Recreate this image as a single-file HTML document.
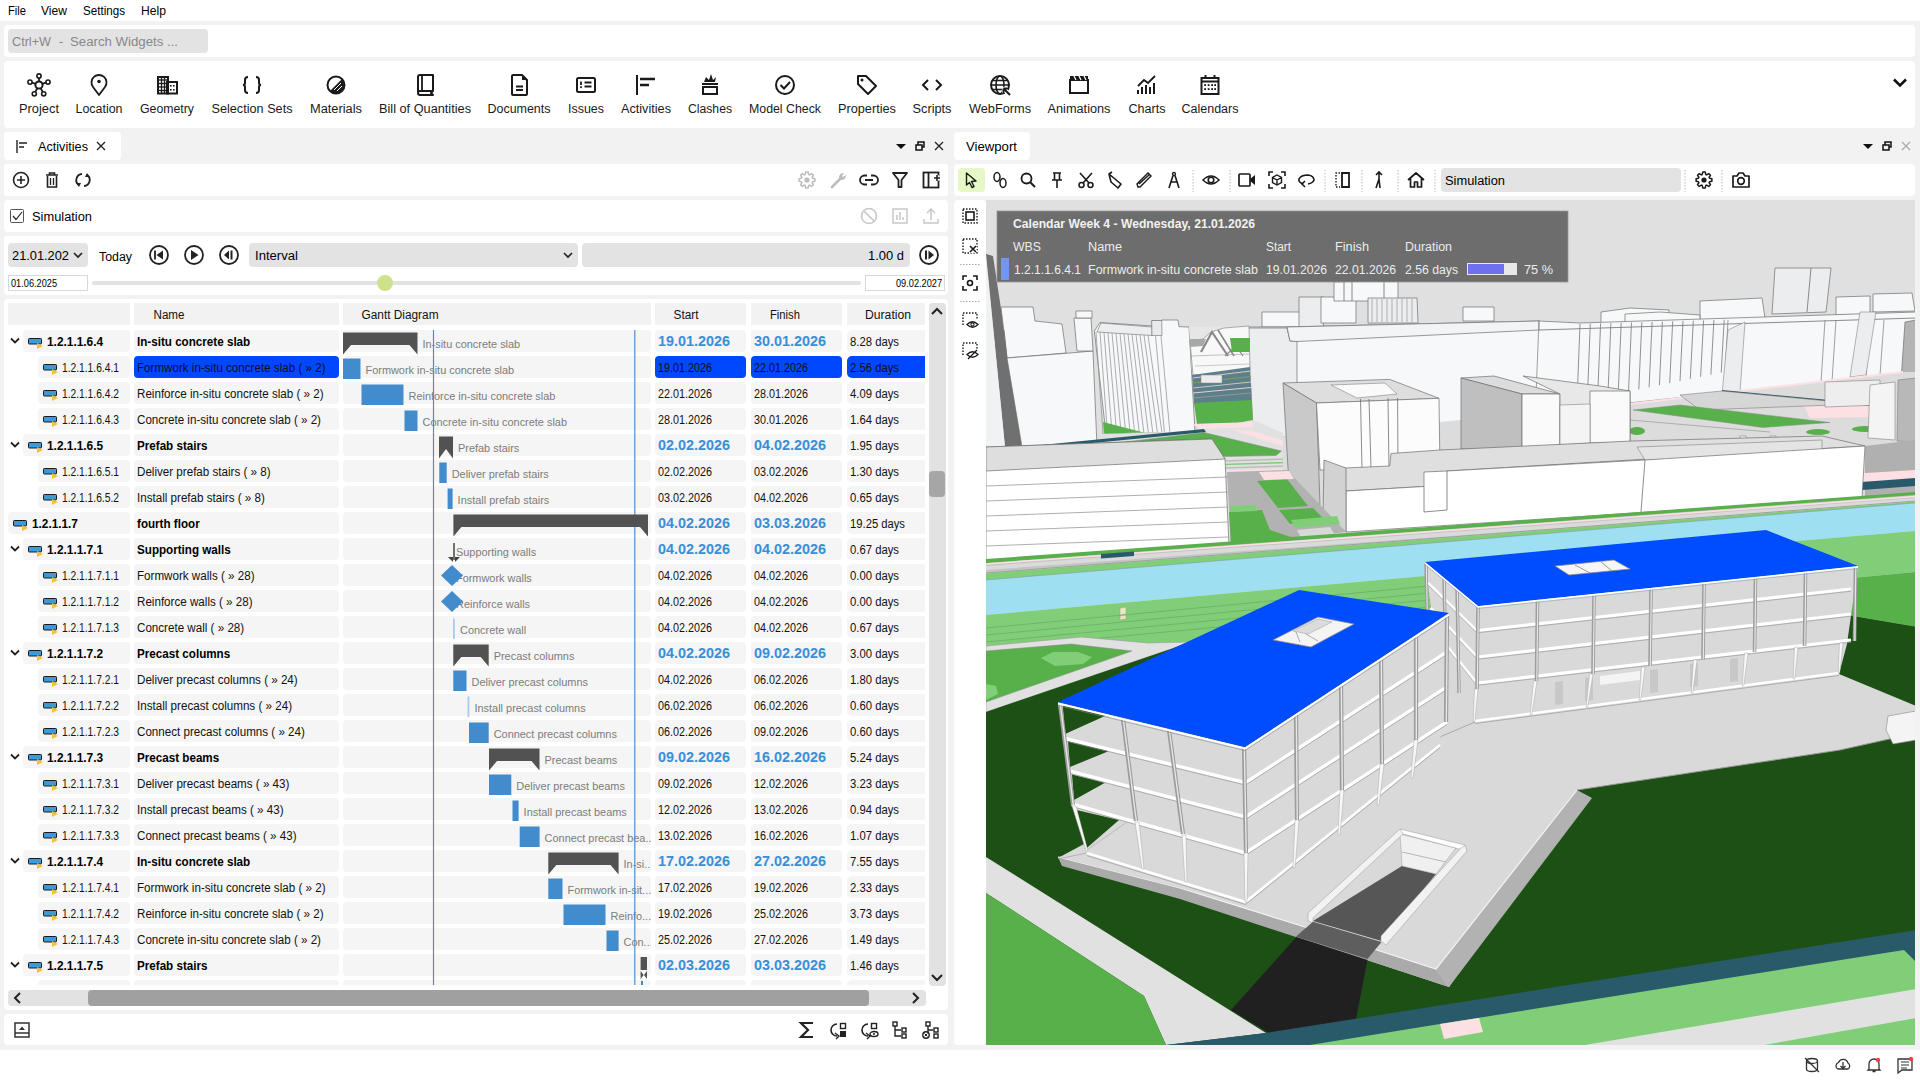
<!DOCTYPE html>
<html><head><meta charset="utf-8"><title>Activities</title>
<style>html,body{margin:0;padding:0;background:#f2f2f2;overflow:hidden}svg{display:block;font-family:"Liberation Sans",sans-serif}</style>
</head><body>
<svg width="1920" height="1080" viewBox="0 0 1920 1080">
<rect width="1920" height="1080" fill="#f2f2f2"/>
<rect x="0" y="0" width="1920" height="21" rx="0" fill="#ffffff" />
<text x="8" y="15" font-size="12.5" fill="#000" font-weight="normal" text-anchor="start" textLength="18" lengthAdjust="spacingAndGlyphs" >File</text>
<text x="41" y="15" font-size="12.5" fill="#000" font-weight="normal" text-anchor="start" textLength="26" lengthAdjust="spacingAndGlyphs" >View</text>
<text x="83" y="15" font-size="12.5" fill="#000" font-weight="normal" text-anchor="start" textLength="42" lengthAdjust="spacingAndGlyphs" >Settings</text>
<text x="141" y="15" font-size="12.5" fill="#000" font-weight="normal" text-anchor="start" textLength="25" lengthAdjust="spacingAndGlyphs" >Help</text>
<rect x="4" y="25" width="1911" height="32" rx="4" fill="#ffffff" />
<rect x="8" y="29" width="200" height="24" rx="4" fill="#e3e3e3" />
<text x="12" y="45.5" font-size="12.5" fill="#888888" font-weight="normal" text-anchor="start" textLength="39" lengthAdjust="spacingAndGlyphs" >Ctrl+W</text>
<text x="59" y="45.5" font-size="12.5" fill="#888888" font-weight="normal" text-anchor="start" >-</text>
<text x="70" y="45.5" font-size="12.5" fill="#888888" font-weight="normal" text-anchor="start" textLength="108" lengthAdjust="spacingAndGlyphs" >Search Widgets ...</text>
<rect x="4" y="61" width="1911" height="67" rx="4" fill="#ffffff" />
<text x="39" y="113" font-size="12.5" fill="#1a1a1a" font-weight="normal" text-anchor="middle" textLength="40" lengthAdjust="spacingAndGlyphs" >Project</text>
<g transform="translate(39,85)"><circle r="3.6" fill="none" stroke="#1a1a1a" stroke-width="2"/><line x1="0.0" y1="-3.6" x2="0.0" y2="-6.8" stroke="#1a1a1a" stroke-width="1.8"/><circle cx="0.0" cy="-9.0" r="2.1" fill="none" stroke="#1a1a1a" stroke-width="1.6"/><line x1="3.4" y1="-1.1" x2="6.9" y2="-2.3" stroke="#1a1a1a" stroke-width="1.8"/><circle cx="9.0" cy="-2.9" r="2.1" fill="none" stroke="#1a1a1a" stroke-width="1.6"/><line x1="-3.4" y1="-1.1" x2="-6.9" y2="-2.3" stroke="#1a1a1a" stroke-width="1.8"/><circle cx="-9.0" cy="-2.9" r="2.1" fill="none" stroke="#1a1a1a" stroke-width="1.6"/><line x1="1.7" y1="3.2" x2="3.7" y2="6.9" stroke="#1a1a1a" stroke-width="1.8"/><circle cx="4.7" cy="8.8" r="2.1" fill="none" stroke="#1a1a1a" stroke-width="1.6"/><line x1="-1.7" y1="3.2" x2="-3.7" y2="6.9" stroke="#1a1a1a" stroke-width="1.8"/><circle cx="-4.7" cy="8.8" r="2.1" fill="none" stroke="#1a1a1a" stroke-width="1.6"/></g>
<text x="99" y="113" font-size="12.5" fill="#1a1a1a" font-weight="normal" text-anchor="middle" textLength="47" lengthAdjust="spacingAndGlyphs" >Location</text>
<g transform="translate(99,85)"><path d="M0 10 L-6 2 A7.5 7.5 0 1 1 6 2 Z" fill="none" stroke="#1a1a1a" stroke-width="1.8" stroke-linejoin="round"/><circle cy="-3.5" r="1.8" fill="#1a1a1a"/></g>
<text x="167" y="113" font-size="12.5" fill="#1a1a1a" font-weight="normal" text-anchor="middle" textLength="54" lengthAdjust="spacingAndGlyphs" >Geometry</text>
<g transform="translate(167,85)"><rect x="-9" y="-8" width="10" height="16.5" fill="none" stroke="#1a1a1a" stroke-width="2"/><rect x="0" y="-3" width="10" height="11.5" fill="none" stroke="#1a1a1a" stroke-width="2"/><line x1="-9" y1="-5" x2="1" y2="-5" stroke="#1a1a1a" stroke-width="1.3"/><line x1="-9" y1="-1.5" x2="1" y2="-1.5" stroke="#1a1a1a" stroke-width="1.3"/><line x1="-9" y1="2" x2="1" y2="2" stroke="#1a1a1a" stroke-width="1.3"/><line x1="-9" y1="5.5" x2="1" y2="5.5" stroke="#1a1a1a" stroke-width="1.3"/><line x1="-5.5" y1="-8" x2="-5.5" y2="8.5" stroke="#1a1a1a" stroke-width="1.3"/><line x1="-2.5" y1="-8" x2="-2.5" y2="8.5" stroke="#1a1a1a" stroke-width="1.3"/><rect x="3" y="0" width="1.6" height="1.6" fill="#1a1a1a"/><rect x="6" y="0" width="1.6" height="1.6" fill="#1a1a1a"/><rect x="3" y="4" width="1.6" height="1.6" fill="#1a1a1a"/><rect x="6" y="4" width="1.6" height="1.6" fill="#1a1a1a"/></g>
<text x="252" y="113" font-size="12.5" fill="#1a1a1a" font-weight="normal" text-anchor="middle" textLength="81" lengthAdjust="spacingAndGlyphs" >Selection Sets</text>
<g transform="translate(252,85)"><path d="M-4 -8 Q-7 -8 -7 -5 V-2 Q-7 0 -9 0 Q-7 0 -7 2 V5 Q-7 8 -4 8 M4 -8 Q7 -8 7 -5 V-2 Q7 0 9 0 Q7 0 7 2 V5 Q7 8 4 8" fill="none" stroke="#1a1a1a" stroke-width="2"/></g>
<text x="336" y="113" font-size="12.5" fill="#1a1a1a" font-weight="normal" text-anchor="middle" textLength="52" lengthAdjust="spacingAndGlyphs" >Materials</text>
<g transform="translate(336,85)"><circle r="8.5" fill="none" stroke="#1a1a1a" stroke-width="2"/><path d="M6 -6 A8.5 8.5 0 0 1 -6 6 Z" fill="#1a1a1a"/><path d="M-2 5 L5 -2 M1 6 L6 1" stroke="#fff" stroke-width="1"/></g>
<text x="425" y="113" font-size="12.5" fill="#1a1a1a" font-weight="normal" text-anchor="middle" textLength="92" lengthAdjust="spacingAndGlyphs" >Bill of Quantities</text>
<g transform="translate(425,85)"><path d="M-7 7 V-8 Q-7 -10 -5 -10 H8 V6 H-5 Q-7 6 -7 8 Q-7 10 -5 10 H8 L6 8 L8 6" fill="none" stroke="#1a1a1a" stroke-width="2" stroke-linejoin="round"/><line x1="-3" y1="-10" x2="-3" y2="6" stroke="#1a1a1a" stroke-width="1.8"/></g>
<text x="519" y="113" font-size="12.5" fill="#1a1a1a" font-weight="normal" text-anchor="middle" textLength="63" lengthAdjust="spacingAndGlyphs" >Documents</text>
<g transform="translate(519,85)"><path d="M-7 -9 Q-7 -10 -6 -10 H3 L8 -5 V9 Q8 10 7 10 H-6 Q-7 10 -7 9 Z" fill="none" stroke="#1a1a1a" stroke-width="2" stroke-linejoin="round"/><path d="M3 -10 L8 -5 H3 Z" fill="#1a1a1a"/><path d="M-3 1.5 H4 M-3 5 H4" stroke="#1a1a1a" stroke-width="1.8"/></g>
<text x="586" y="113" font-size="12.5" fill="#1a1a1a" font-weight="normal" text-anchor="middle" textLength="36" lengthAdjust="spacingAndGlyphs" >Issues</text>
<g transform="translate(586,85)"><rect x="-9" y="-7" width="18" height="14" rx="1.5" fill="none" stroke="#1a1a1a" stroke-width="2"/><path d="M-5 -3.5 V0 M-1.5 -2.5 H5.5 M-1.5 1.5 H5.5" stroke="#1a1a1a" stroke-width="1.8"/><rect x="-5.9" y="1.3" width="1.8" height="1.8" fill="#1a1a1a"/></g>
<text x="646" y="113" font-size="12.5" fill="#1a1a1a" font-weight="normal" text-anchor="middle" textLength="50" lengthAdjust="spacingAndGlyphs" >Activities</text>
<g transform="translate(646,85)"><path d="M-9 -10 V10" stroke="#1a1a1a" stroke-width="2"/><path d="M-6 -6 H9 M-6 0 H3" stroke="#1a1a1a" stroke-width="2.5"/></g>
<text x="710" y="113" font-size="12.5" fill="#1a1a1a" font-weight="normal" text-anchor="middle" textLength="44" lengthAdjust="spacingAndGlyphs" >Clashes</text>
<g transform="translate(710,85)"><rect x="-7" y="2" width="14" height="7" fill="none" stroke="#1a1a1a" stroke-width="2"/><path d="M-8 -1 H8" stroke="#1a1a1a" stroke-width="2"/><path d="M-6 -3 L-4 -8 L-1 -5 L1 -11 L3 -5 L6 -8 L5 -3 Z" fill="#1a1a1a"/></g>
<text x="785" y="113" font-size="12.5" fill="#1a1a1a" font-weight="normal" text-anchor="middle" textLength="72" lengthAdjust="spacingAndGlyphs" >Model Check</text>
<g transform="translate(785,85)"><circle r="9" fill="none" stroke="#1a1a1a" stroke-width="2"/><path d="M-4.5 0 L-1 3.5 L5 -3" fill="none" stroke="#1a1a1a" stroke-width="2"/></g>
<text x="867" y="113" font-size="12.5" fill="#1a1a1a" font-weight="normal" text-anchor="middle" textLength="58" lengthAdjust="spacingAndGlyphs" >Properties</text>
<g transform="translate(867,85)"><path d="M-9 -9 H-1 L9 1 L1 9 L-9 -1 Z" fill="none" stroke="#1a1a1a" stroke-width="2" stroke-linejoin="round"/><circle cx="-5" cy="-5" r="1.5" fill="#1a1a1a"/></g>
<text x="932" y="113" font-size="12.5" fill="#1a1a1a" font-weight="normal" text-anchor="middle" textLength="39" lengthAdjust="spacingAndGlyphs" >Scripts</text>
<g transform="translate(932,85)"><path d="M-4 -5 L-9 0 L-4 5 M4 -5 L9 0 L4 5" fill="none" stroke="#1a1a1a" stroke-width="2"/></g>
<text x="1000" y="113" font-size="12.5" fill="#1a1a1a" font-weight="normal" text-anchor="middle" textLength="62" lengthAdjust="spacingAndGlyphs" >WebForms</text>
<g transform="translate(1000,85)"><circle r="9" fill="none" stroke="#1a1a1a" stroke-width="2"/><ellipse rx="4" ry="9" fill="none" stroke="#1a1a1a" stroke-width="1.6"/><path d="M-9 0 H9 M-8 -4.5 H8 M-8 4.5 H8" stroke="#1a1a1a" stroke-width="1.4"/><path d="M3 3 L10 10 M4 8 V4 H8" stroke="#fff" stroke-width="4"/><path d="M3.5 3.5 H9 M3.5 3.5 V9 M4 4 L10 10" stroke="#1a1a1a" stroke-width="2"/></g>
<text x="1079" y="113" font-size="12.5" fill="#1a1a1a" font-weight="normal" text-anchor="middle" textLength="63" lengthAdjust="spacingAndGlyphs" >Animations</text>
<g transform="translate(1079,85)"><rect x="-9" y="-5" width="18" height="13" fill="none" stroke="#1a1a1a" stroke-width="2"/><path d="M-9 -9 H9 V-5 H-9 Z" fill="#1a1a1a"/><path d="M-5 -9 L-3 -5 M0 -9 L2 -5 M5 -9 L7 -5" stroke="#fff" stroke-width="1.2"/></g>
<text x="1147" y="113" font-size="12.5" fill="#1a1a1a" font-weight="normal" text-anchor="middle" textLength="37" lengthAdjust="spacingAndGlyphs" >Charts</text>
<g transform="translate(1147,85)"><path d="M-9 9 V5 M-5 9 V2 M-1 9 V0 M3 9 V2 M7 9 V-2" stroke="#1a1a1a" stroke-width="2"/><path d="M-9 1 L-3 -5 L1 -2 L8 -9" fill="none" stroke="#1a1a1a" stroke-width="1.8"/></g>
<text x="1210" y="113" font-size="12.5" fill="#1a1a1a" font-weight="normal" text-anchor="middle" textLength="57" lengthAdjust="spacingAndGlyphs" >Calendars</text>
<g transform="translate(1210,85)"><rect x="-8.5" y="-7" width="17" height="16" fill="none" stroke="#1a1a1a" stroke-width="2"/><path d="M-8.5 -3.5 H8.5" stroke="#1a1a1a" stroke-width="2"/><path d="M-4.5 -10 V-6 M4.5 -10 V-6" stroke="#1a1a1a" stroke-width="2"/><rect x="-5.8" y="-0.8" width="1.8" height="1.8" fill="#1a1a1a"/><rect x="-2.3" y="-0.8" width="1.8" height="1.8" fill="#1a1a1a"/><rect x="1.2" y="-0.8" width="1.8" height="1.8" fill="#1a1a1a"/><rect x="4.2" y="-0.8" width="1.8" height="1.8" fill="#1a1a1a"/><rect x="-5.8" y="3.2" width="1.8" height="1.8" fill="#1a1a1a"/><rect x="-2.3" y="3.2" width="1.8" height="1.8" fill="#1a1a1a"/><rect x="1.2" y="3.2" width="1.8" height="1.8" fill="#1a1a1a"/><rect x="4.2" y="3.2" width="1.8" height="1.8" fill="#1a1a1a"/></g>
<path d="M1894 79.5 L1900 85.5 L1906 79.5" fill="none" stroke="#111" stroke-width="2.6" />
<rect x="4" y="132" width="117" height="28" rx="4" fill="#ffffff" />
<g transform="translate(21,146)"><path d="M-4 -6 V7" stroke="#222" stroke-width="1.4"/><path d="M-2 -3 H6 M-2 1 H3" stroke="#222" stroke-width="1.6"/></g>
<text x="38" y="151" font-size="12.5" fill="#000" font-weight="normal" text-anchor="start" textLength="50" lengthAdjust="spacingAndGlyphs" >Activities</text>
<path d="M97 142 L105 150 M105 142 L97 150" fill="none" stroke="#222" stroke-width="1.3" />
<path d="M896 144 L906 144 L901 149 Z" fill="#111" stroke="none" stroke-width="1" />
<g transform="translate(920,146)"><rect x="-4" y="-1" width="6" height="5" fill="none" stroke="#111" stroke-width="1.5"/><path d="M-2 -1 V-4 H4 V1 H2" fill="none" stroke="#111" stroke-width="1.5"/></g>
<path d="M935 142 L943 150 M943 142 L935 150" fill="none" stroke="#222" stroke-width="1.3" />
<rect x="4" y="164" width="944" height="32" rx="4" fill="#ffffff" />
<g transform="translate(21,180)"><circle r="7.5" fill="none" stroke="#222" stroke-width="1.6"/><path d="M-4 0 H4 M0 -4 V4" stroke="#222" stroke-width="1.6"/></g>
<g transform="translate(52,180)"><path d="M-6 -5 H6 M-2.5 -5 V-7 H2.5 V-5" fill="none" stroke="#222" stroke-width="1.6"/><path d="M-4.5 -4 V7 H4.5 V-4" fill="none" stroke="#222" stroke-width="1.6"/><path d="M-1.5 -2 V5 M1.5 -2 V5" stroke="#222" stroke-width="1.3"/></g>
<g transform="translate(83,180)"><path d="M-1 -6 A6 6 0 0 0 -4 5 M1 6 A6 6 0 0 0 4 -5" fill="none" stroke="#222" stroke-width="1.8"/><path d="M-7 3 L-4 7 L-2 3 Z M7 -3 L4 -7 L2 -3 Z" fill="#222"/></g>
<g transform="translate(807,180)"><polygon points="5.55,-1.70 7.90,-1.25 7.90,1.25 5.55,1.70 5.12,2.72 6.47,4.70 4.70,6.47 2.72,5.12 1.70,5.55 1.25,7.90 -1.25,7.90 -1.70,5.55 -2.72,5.12 -4.70,6.47 -6.47,4.70 -5.12,2.72 -5.55,1.70 -7.90,1.25 -7.90,-1.25 -5.55,-1.70 -5.12,-2.72 -6.47,-4.70 -4.70,-6.47 -2.72,-5.12 -1.70,-5.55 -1.25,-7.90 1.25,-7.90 1.70,-5.55 2.72,-5.12 4.70,-6.47 6.47,-4.70 5.12,-2.72" fill="none" stroke="#bdbdbd" stroke-width="1.5" stroke-linejoin="round"/><circle r="2.6" fill="#bdbdbd"/></g>
<g transform="translate(838,180)"><path d="M-6 7 L2 -1" stroke="#bdbdbd" stroke-width="2.6" stroke-linecap="round"/><path d="M1 -2 A4.5 4.5 0 0 1 6 -7 L4 -4 L5 -3 L8 -5 A4.5 4.5 0 0 1 3 0 Z" fill="#bdbdbd"/></g>
<g transform="translate(869,180)"><path d="M-2 -4.5 H-4.5 A4.5 4.5 0 0 0 -4.5 4.5 H-2 M2 -4.5 H4.5 A4.5 4.5 0 0 1 4.5 4.5 H2 M-4 0 H4" fill="none" stroke="#222" stroke-width="1.8"/></g>
<g transform="translate(900,180)"><path d="M-7 -7 H7 L1.5 0 V7 H-1.5 V0 Z" fill="none" stroke="#222" stroke-width="1.8" stroke-linejoin="round"/></g>
<g transform="translate(931,180)"><rect x="-7.5" y="-7.5" width="15" height="15" fill="none" stroke="#222" stroke-width="1.8"/><path d="M-2.5 -7.5 V7.5" stroke="#222" stroke-width="1.8"/><path d="M3 -2 H9 M6 -5 V1" stroke="#fff" stroke-width="3.5"/><path d="M3 -2 H9 M6 -5 V1" stroke="#222" stroke-width="1.6"/></g>
<rect x="4" y="200" width="944" height="32" rx="4" fill="#ffffff" />
<rect x="10.5" y="209.5" width="13" height="13" rx="1" fill="#fff" stroke="#555" stroke-width="1"/>
<path d="M13 216 L16 219.5 L22 212" fill="none" stroke="#222" stroke-width="1.2" />
<text x="32" y="221" font-size="12.5" fill="#000" font-weight="normal" text-anchor="start" textLength="60" lengthAdjust="spacingAndGlyphs" >Simulation</text>
<g transform="translate(869,216)"><circle r="7.5" fill="none" stroke="#c8c8c8" stroke-width="1.6"/><path d="M-5.3 -5.3 L5.3 5.3" stroke="#c8c8c8" stroke-width="1.6"/></g>
<g transform="translate(900,216)"><rect x="-7" y="-7" width="14" height="14" fill="none" stroke="#c8c8c8" stroke-width="1.5"/><path d="M-3 4 V-1 M0 4 V-4 M3 4 V1" stroke="#c8c8c8" stroke-width="1.5"/></g>
<g transform="translate(931,216)"><path d="M-7 3 V7 H7 V3 M0 4 V-7 M-4 -3 L0 -7 L4 -3" fill="none" stroke="#c8c8c8" stroke-width="1.5"/></g>
<rect x="4" y="236" width="944" height="59" rx="4" fill="#ffffff" />
<rect x="8" y="243" width="80" height="24" rx="4" fill="#e3e3e3" />
<text x="12" y="260" font-size="12.5" fill="#000" font-weight="normal" text-anchor="start" textLength="57" lengthAdjust="spacingAndGlyphs" >21.01.202</text>
<path d="M74 253 L78 257 L82 253" fill="none" stroke="#222" stroke-width="1.6" />
<text x="99" y="261" font-size="12.5" fill="#000" font-weight="normal" text-anchor="start" textLength="33" lengthAdjust="spacingAndGlyphs" >Today</text>
<g transform="translate(159,255)"><circle r="9" fill="none" stroke="#222" stroke-width="1.8"/><path d="M-4 -4.5 V4.5" stroke="#222" stroke-width="1.8"/><path d="M4 -4.5 V4.5 L-2.5 0 Z" fill="#222"/></g>
<g transform="translate(194,255)"><circle r="9" fill="none" stroke="#222" stroke-width="1.8"/><path d="M-3 -5 V5 L4.5 0 Z" fill="#222"/></g>
<g transform="translate(229,255)"><circle r="9" fill="none" stroke="#222" stroke-width="1.8"/><path d="M2.5 -4.5 V4.5" stroke="#222" stroke-width="2"/><path d="M0 -4.5 V4.5 L-5 0 Z" fill="#222"/></g>
<rect x="249" y="243" width="329" height="24" rx="4" fill="#e3e3e3" />
<text x="255" y="260" font-size="12.5" fill="#000" font-weight="normal" text-anchor="start" textLength="43" lengthAdjust="spacingAndGlyphs" >Interval</text>
<path d="M564 253 L568 257 L572 253" fill="none" stroke="#222" stroke-width="1.6" />
<rect x="582" y="243" width="328" height="24" rx="4" fill="#e3e3e3" />
<text x="904" y="260" font-size="12.5" fill="#000" font-weight="normal" text-anchor="end" textLength="36" lengthAdjust="spacingAndGlyphs" >1.00 d</text>
<g transform="translate(929,255)"><circle r="9" fill="none" stroke="#222" stroke-width="1.8"/><path d="M-3 -4.5 V4.5" stroke="#222" stroke-width="2"/><path d="M-0.5 -4.5 V4.5 L5 0 Z" fill="#222"/></g>
<rect x="8.5" y="275.5" width="79" height="15" rx="0" fill="#fff" stroke="#d8d8d8" stroke-width="1"/>
<text x="11" y="287" font-size="10" fill="#000" font-weight="normal" text-anchor="start" textLength="46" lengthAdjust="spacingAndGlyphs" >01.06.2025</text>
<rect x="92" y="281" width="769" height="4" rx="2" fill="#e2e2e2" />
<circle cx="385" cy="283" r="8" fill="#cde28b"/>
<rect x="865.5" y="275.5" width="79" height="15" rx="0" fill="#fff" stroke="#d8d8d8" stroke-width="1"/>
<text x="942" y="287" font-size="10" fill="#000" font-weight="normal" text-anchor="end" textLength="46" lengthAdjust="spacingAndGlyphs" >09.02.2027</text>
<rect x="4" y="299" width="944" height="711" rx="4" fill="#ffffff" />
<rect x="8" y="303" width="122" height="22" rx="1" fill="#f2f2f2" />
<rect x="134" y="303" width="205" height="22" rx="1" fill="#f2f2f2" />
<text x="169" y="319" font-size="12.5" fill="#111" font-weight="normal" text-anchor="middle" textLength="31" lengthAdjust="spacingAndGlyphs" >Name</text>
<rect x="343" y="303" width="308" height="22" rx="1" fill="#f2f2f2" />
<text x="400" y="319" font-size="12.5" fill="#111" font-weight="normal" text-anchor="middle" textLength="77" lengthAdjust="spacingAndGlyphs" >Gantt Diagram</text>
<rect x="655" y="303" width="91" height="22" rx="1" fill="#f2f2f2" />
<text x="686" y="319" font-size="12.5" fill="#111" font-weight="normal" text-anchor="middle" textLength="25" lengthAdjust="spacingAndGlyphs" >Start</text>
<rect x="751" y="303" width="91" height="22" rx="1" fill="#f2f2f2" />
<text x="785" y="319" font-size="12.5" fill="#111" font-weight="normal" text-anchor="middle" textLength="30" lengthAdjust="spacingAndGlyphs" >Finish</text>
<rect x="847" y="303" width="78" height="22" rx="1" fill="#f2f2f2" />
<text x="888" y="319" font-size="12.5" fill="#111" font-weight="normal" text-anchor="middle" textLength="46" lengthAdjust="spacingAndGlyphs" >Duration</text>
<defs><clipPath id="gclip"><rect x="343" y="328" width="308" height="657"/></clipPath><clipPath id="tclip"><rect x="4" y="328" width="921" height="657"/></clipPath></defs>
<g clip-path="url(#tclip)">
<rect x="23" y="330" width="107" height="22" rx="4" fill="#f5f5f5" />
<rect x="134" y="330" width="205" height="22" rx="4" fill="#f5f5f5" />
<rect x="343" y="330" width="308" height="22" rx="4" fill="#f5f5f5" />
<rect x="655" y="330" width="91" height="22" rx="4" fill="#f5f5f5" />
<rect x="751" y="330" width="91" height="22" rx="4" fill="#f5f5f5" />
<rect x="847" y="330" width="88" height="22" rx="5" fill="#f5f5f5" />
<path d="M11 338.5 L15 342.5 L19 338.5" fill="none" stroke="#222" stroke-width="1.8" />
<rect x="28.5" y="338.5" width="13" height="5.5" rx="0.8" fill="#3d9ad6" stroke="#1a1a1a" stroke-width="1"/>
<path d="M37 343 L43 346 L37 349 Z" fill="#f5c235" stroke="none" stroke-width="1" />
<text x="47" y="345.5" font-size="12.2" fill="#000" font-weight="bold" text-anchor="start" textLength="56.099999999999994" lengthAdjust="spacingAndGlyphs" >1.2.1.1.6.4</text>
<text x="137" y="345.5" font-size="12.5" fill="#000" font-weight="bold" text-anchor="start" textLength="113.2" lengthAdjust="spacingAndGlyphs" >In-situ concrete slab</text>
<text x="658" y="346.0" font-size="14" fill="#3b8ed6" font-weight="bold" text-anchor="start" textLength="72" lengthAdjust="spacingAndGlyphs" >19.01.2026</text>
<text x="754" y="346.0" font-size="14" fill="#3b8ed6" font-weight="bold" text-anchor="start" textLength="72" lengthAdjust="spacingAndGlyphs" >30.01.2026</text>
<text x="850" y="345.5" font-size="12" fill="#111" font-weight="normal" text-anchor="start" textLength="49" lengthAdjust="spacingAndGlyphs" >8.28 days</text>
<rect x="38" y="356" width="92" height="22" rx="4" fill="#f5f5f5" />
<rect x="134" y="356" width="205" height="22" rx="4" fill="#0048ff" />
<rect x="343" y="356" width="308" height="22" rx="4" fill="#f5f5f5" />
<rect x="655" y="356" width="91" height="22" rx="4" fill="#0048ff" />
<rect x="751" y="356" width="91" height="22" rx="4" fill="#0048ff" />
<rect x="847" y="356" width="88" height="22" rx="5" fill="#0048ff" />
<rect x="43.5" y="364.5" width="13" height="5.5" rx="0.8" fill="#3d9ad6" stroke="#1a1a1a" stroke-width="1"/>
<path d="M52 369 L58 372 L52 375 Z" fill="#f5c235" stroke="none" stroke-width="1" />
<text x="62" y="371.5" font-size="12" fill="#111" font-weight="normal" text-anchor="start" textLength="56.94" lengthAdjust="spacingAndGlyphs" >1.2.1.1.6.4.1</text>
<text x="137" y="371.5" font-size="12.3" fill="#111" font-weight="normal" text-anchor="start" textLength="188.5" lengthAdjust="spacingAndGlyphs" >Formwork in-situ concrete slab ( » 2)</text>
<text x="658" y="371.5" font-size="12" fill="#111" font-weight="normal" text-anchor="start" textLength="54" lengthAdjust="spacingAndGlyphs" >19.01.2026</text>
<text x="754" y="371.5" font-size="12" fill="#111" font-weight="normal" text-anchor="start" textLength="54" lengthAdjust="spacingAndGlyphs" >22.01.2026</text>
<text x="850" y="371.5" font-size="12" fill="#111" font-weight="normal" text-anchor="start" textLength="49" lengthAdjust="spacingAndGlyphs" >2.56 days</text>
<rect x="38" y="382" width="92" height="22" rx="4" fill="#f5f5f5" />
<rect x="134" y="382" width="205" height="22" rx="4" fill="#f5f5f5" />
<rect x="343" y="382" width="308" height="22" rx="4" fill="#f5f5f5" />
<rect x="655" y="382" width="91" height="22" rx="4" fill="#f5f5f5" />
<rect x="751" y="382" width="91" height="22" rx="4" fill="#f5f5f5" />
<rect x="847" y="382" width="88" height="22" rx="5" fill="#f5f5f5" />
<rect x="43.5" y="390.5" width="13" height="5.5" rx="0.8" fill="#3d9ad6" stroke="#1a1a1a" stroke-width="1"/>
<path d="M52 395 L58 398 L52 401 Z" fill="#f5c235" stroke="none" stroke-width="1" />
<text x="62" y="397.5" font-size="12" fill="#111" font-weight="normal" text-anchor="start" textLength="56.94" lengthAdjust="spacingAndGlyphs" >1.2.1.1.6.4.2</text>
<text x="137" y="397.5" font-size="12.3" fill="#111" font-weight="normal" text-anchor="start" textLength="186.6" lengthAdjust="spacingAndGlyphs" >Reinforce in-situ concrete slab ( » 2)</text>
<text x="658" y="397.5" font-size="12" fill="#111" font-weight="normal" text-anchor="start" textLength="54" lengthAdjust="spacingAndGlyphs" >22.01.2026</text>
<text x="754" y="397.5" font-size="12" fill="#111" font-weight="normal" text-anchor="start" textLength="54" lengthAdjust="spacingAndGlyphs" >28.01.2026</text>
<text x="850" y="397.5" font-size="12" fill="#111" font-weight="normal" text-anchor="start" textLength="49" lengthAdjust="spacingAndGlyphs" >4.09 days</text>
<rect x="38" y="408" width="92" height="22" rx="4" fill="#f5f5f5" />
<rect x="134" y="408" width="205" height="22" rx="4" fill="#f5f5f5" />
<rect x="343" y="408" width="308" height="22" rx="4" fill="#f5f5f5" />
<rect x="655" y="408" width="91" height="22" rx="4" fill="#f5f5f5" />
<rect x="751" y="408" width="91" height="22" rx="4" fill="#f5f5f5" />
<rect x="847" y="408" width="88" height="22" rx="5" fill="#f5f5f5" />
<rect x="43.5" y="416.5" width="13" height="5.5" rx="0.8" fill="#3d9ad6" stroke="#1a1a1a" stroke-width="1"/>
<path d="M52 421 L58 424 L52 427 Z" fill="#f5c235" stroke="none" stroke-width="1" />
<text x="62" y="423.5" font-size="12" fill="#111" font-weight="normal" text-anchor="start" textLength="56.94" lengthAdjust="spacingAndGlyphs" >1.2.1.1.6.4.3</text>
<text x="137" y="423.5" font-size="12.3" fill="#111" font-weight="normal" text-anchor="start" textLength="184.0" lengthAdjust="spacingAndGlyphs" >Concrete in-situ concrete slab ( » 2)</text>
<text x="658" y="423.5" font-size="12" fill="#111" font-weight="normal" text-anchor="start" textLength="54" lengthAdjust="spacingAndGlyphs" >28.01.2026</text>
<text x="754" y="423.5" font-size="12" fill="#111" font-weight="normal" text-anchor="start" textLength="54" lengthAdjust="spacingAndGlyphs" >30.01.2026</text>
<text x="850" y="423.5" font-size="12" fill="#111" font-weight="normal" text-anchor="start" textLength="49" lengthAdjust="spacingAndGlyphs" >1.64 days</text>
<rect x="23" y="434" width="107" height="22" rx="4" fill="#f5f5f5" />
<rect x="134" y="434" width="205" height="22" rx="4" fill="#f5f5f5" />
<rect x="343" y="434" width="308" height="22" rx="4" fill="#f5f5f5" />
<rect x="655" y="434" width="91" height="22" rx="4" fill="#f5f5f5" />
<rect x="751" y="434" width="91" height="22" rx="4" fill="#f5f5f5" />
<rect x="847" y="434" width="88" height="22" rx="5" fill="#f5f5f5" />
<path d="M11 442.5 L15 446.5 L19 442.5" fill="none" stroke="#222" stroke-width="1.8" />
<rect x="28.5" y="442.5" width="13" height="5.5" rx="0.8" fill="#3d9ad6" stroke="#1a1a1a" stroke-width="1"/>
<path d="M37 447 L43 450 L37 453 Z" fill="#f5c235" stroke="none" stroke-width="1" />
<text x="47" y="449.5" font-size="12.2" fill="#000" font-weight="bold" text-anchor="start" textLength="56.099999999999994" lengthAdjust="spacingAndGlyphs" >1.2.1.1.6.5</text>
<text x="137" y="449.5" font-size="12.5" fill="#000" font-weight="bold" text-anchor="start" textLength="70.5" lengthAdjust="spacingAndGlyphs" >Prefab stairs</text>
<text x="658" y="450.0" font-size="14" fill="#3b8ed6" font-weight="bold" text-anchor="start" textLength="72" lengthAdjust="spacingAndGlyphs" >02.02.2026</text>
<text x="754" y="450.0" font-size="14" fill="#3b8ed6" font-weight="bold" text-anchor="start" textLength="72" lengthAdjust="spacingAndGlyphs" >04.02.2026</text>
<text x="850" y="449.5" font-size="12" fill="#111" font-weight="normal" text-anchor="start" textLength="49" lengthAdjust="spacingAndGlyphs" >1.95 days</text>
<rect x="38" y="460" width="92" height="22" rx="4" fill="#f5f5f5" />
<rect x="134" y="460" width="205" height="22" rx="4" fill="#f5f5f5" />
<rect x="343" y="460" width="308" height="22" rx="4" fill="#f5f5f5" />
<rect x="655" y="460" width="91" height="22" rx="4" fill="#f5f5f5" />
<rect x="751" y="460" width="91" height="22" rx="4" fill="#f5f5f5" />
<rect x="847" y="460" width="88" height="22" rx="5" fill="#f5f5f5" />
<rect x="43.5" y="468.5" width="13" height="5.5" rx="0.8" fill="#3d9ad6" stroke="#1a1a1a" stroke-width="1"/>
<path d="M52 473 L58 476 L52 479 Z" fill="#f5c235" stroke="none" stroke-width="1" />
<text x="62" y="475.5" font-size="12" fill="#111" font-weight="normal" text-anchor="start" textLength="56.94" lengthAdjust="spacingAndGlyphs" >1.2.1.1.6.5.1</text>
<text x="137" y="475.5" font-size="12.3" fill="#111" font-weight="normal" text-anchor="start" textLength="133.6" lengthAdjust="spacingAndGlyphs" >Deliver prefab stairs ( » 8)</text>
<text x="658" y="475.5" font-size="12" fill="#111" font-weight="normal" text-anchor="start" textLength="54" lengthAdjust="spacingAndGlyphs" >02.02.2026</text>
<text x="754" y="475.5" font-size="12" fill="#111" font-weight="normal" text-anchor="start" textLength="54" lengthAdjust="spacingAndGlyphs" >03.02.2026</text>
<text x="850" y="475.5" font-size="12" fill="#111" font-weight="normal" text-anchor="start" textLength="49" lengthAdjust="spacingAndGlyphs" >1.30 days</text>
<rect x="38" y="486" width="92" height="22" rx="4" fill="#f5f5f5" />
<rect x="134" y="486" width="205" height="22" rx="4" fill="#f5f5f5" />
<rect x="343" y="486" width="308" height="22" rx="4" fill="#f5f5f5" />
<rect x="655" y="486" width="91" height="22" rx="4" fill="#f5f5f5" />
<rect x="751" y="486" width="91" height="22" rx="4" fill="#f5f5f5" />
<rect x="847" y="486" width="88" height="22" rx="5" fill="#f5f5f5" />
<rect x="43.5" y="494.5" width="13" height="5.5" rx="0.8" fill="#3d9ad6" stroke="#1a1a1a" stroke-width="1"/>
<path d="M52 499 L58 502 L52 505 Z" fill="#f5c235" stroke="none" stroke-width="1" />
<text x="62" y="501.5" font-size="12" fill="#111" font-weight="normal" text-anchor="start" textLength="56.94" lengthAdjust="spacingAndGlyphs" >1.2.1.1.6.5.2</text>
<text x="137" y="501.5" font-size="12.3" fill="#111" font-weight="normal" text-anchor="start" textLength="127.8" lengthAdjust="spacingAndGlyphs" >Install prefab stairs ( » 8)</text>
<text x="658" y="501.5" font-size="12" fill="#111" font-weight="normal" text-anchor="start" textLength="54" lengthAdjust="spacingAndGlyphs" >03.02.2026</text>
<text x="754" y="501.5" font-size="12" fill="#111" font-weight="normal" text-anchor="start" textLength="54" lengthAdjust="spacingAndGlyphs" >04.02.2026</text>
<text x="850" y="501.5" font-size="12" fill="#111" font-weight="normal" text-anchor="start" textLength="49" lengthAdjust="spacingAndGlyphs" >0.65 days</text>
<rect x="8" y="512" width="122" height="22" rx="4" fill="#f5f5f5" />
<rect x="134" y="512" width="205" height="22" rx="4" fill="#f5f5f5" />
<rect x="343" y="512" width="308" height="22" rx="4" fill="#f5f5f5" />
<rect x="655" y="512" width="91" height="22" rx="4" fill="#f5f5f5" />
<rect x="751" y="512" width="91" height="22" rx="4" fill="#f5f5f5" />
<rect x="847" y="512" width="88" height="22" rx="5" fill="#f5f5f5" />
<rect x="13.5" y="520.5" width="13" height="5.5" rx="0.8" fill="#3d9ad6" stroke="#1a1a1a" stroke-width="1"/>
<path d="M22 525 L28 528 L22 531 Z" fill="#f5c235" stroke="none" stroke-width="1" />
<text x="32" y="527.5" font-size="12.2" fill="#000" font-weight="bold" text-anchor="start" textLength="45.9" lengthAdjust="spacingAndGlyphs" >1.2.1.1.7</text>
<text x="137" y="527.5" font-size="12.5" fill="#000" font-weight="bold" text-anchor="start" textLength="62.7" lengthAdjust="spacingAndGlyphs" >fourth floor</text>
<text x="658" y="528.0" font-size="14" fill="#3b8ed6" font-weight="bold" text-anchor="start" textLength="72" lengthAdjust="spacingAndGlyphs" >04.02.2026</text>
<text x="754" y="528.0" font-size="14" fill="#3b8ed6" font-weight="bold" text-anchor="start" textLength="72" lengthAdjust="spacingAndGlyphs" >03.03.2026</text>
<text x="850" y="527.5" font-size="12" fill="#111" font-weight="normal" text-anchor="start" textLength="55" lengthAdjust="spacingAndGlyphs" >19.25 days</text>
<rect x="23" y="538" width="107" height="22" rx="4" fill="#f5f5f5" />
<rect x="134" y="538" width="205" height="22" rx="4" fill="#f5f5f5" />
<rect x="343" y="538" width="308" height="22" rx="4" fill="#f5f5f5" />
<rect x="655" y="538" width="91" height="22" rx="4" fill="#f5f5f5" />
<rect x="751" y="538" width="91" height="22" rx="4" fill="#f5f5f5" />
<rect x="847" y="538" width="88" height="22" rx="5" fill="#f5f5f5" />
<path d="M11 546.5 L15 550.5 L19 546.5" fill="none" stroke="#222" stroke-width="1.8" />
<rect x="28.5" y="546.5" width="13" height="5.5" rx="0.8" fill="#3d9ad6" stroke="#1a1a1a" stroke-width="1"/>
<path d="M37 551 L43 554 L37 557 Z" fill="#f5c235" stroke="none" stroke-width="1" />
<text x="47" y="553.5" font-size="12.2" fill="#000" font-weight="bold" text-anchor="start" textLength="56.099999999999994" lengthAdjust="spacingAndGlyphs" >1.2.1.1.7.1</text>
<text x="137" y="553.5" font-size="12.5" fill="#000" font-weight="bold" text-anchor="start" textLength="93.8" lengthAdjust="spacingAndGlyphs" >Supporting walls</text>
<text x="658" y="554.0" font-size="14" fill="#3b8ed6" font-weight="bold" text-anchor="start" textLength="72" lengthAdjust="spacingAndGlyphs" >04.02.2026</text>
<text x="754" y="554.0" font-size="14" fill="#3b8ed6" font-weight="bold" text-anchor="start" textLength="72" lengthAdjust="spacingAndGlyphs" >04.02.2026</text>
<text x="850" y="553.5" font-size="12" fill="#111" font-weight="normal" text-anchor="start" textLength="49" lengthAdjust="spacingAndGlyphs" >0.67 days</text>
<rect x="38" y="564" width="92" height="22" rx="4" fill="#f5f5f5" />
<rect x="134" y="564" width="205" height="22" rx="4" fill="#f5f5f5" />
<rect x="343" y="564" width="308" height="22" rx="4" fill="#f5f5f5" />
<rect x="655" y="564" width="91" height="22" rx="4" fill="#f5f5f5" />
<rect x="751" y="564" width="91" height="22" rx="4" fill="#f5f5f5" />
<rect x="847" y="564" width="88" height="22" rx="5" fill="#f5f5f5" />
<rect x="43.5" y="572.5" width="13" height="5.5" rx="0.8" fill="#3d9ad6" stroke="#1a1a1a" stroke-width="1"/>
<path d="M52 577 L58 580 L52 583 Z" fill="#f5c235" stroke="none" stroke-width="1" />
<text x="62" y="579.5" font-size="12" fill="#111" font-weight="normal" text-anchor="start" textLength="56.94" lengthAdjust="spacingAndGlyphs" >1.2.1.1.7.1.1</text>
<text x="137" y="579.5" font-size="12.3" fill="#111" font-weight="normal" text-anchor="start" textLength="117.5" lengthAdjust="spacingAndGlyphs" >Formwork walls ( » 28)</text>
<text x="658" y="579.5" font-size="12" fill="#111" font-weight="normal" text-anchor="start" textLength="54" lengthAdjust="spacingAndGlyphs" >04.02.2026</text>
<text x="754" y="579.5" font-size="12" fill="#111" font-weight="normal" text-anchor="start" textLength="54" lengthAdjust="spacingAndGlyphs" >04.02.2026</text>
<text x="850" y="579.5" font-size="12" fill="#111" font-weight="normal" text-anchor="start" textLength="49" lengthAdjust="spacingAndGlyphs" >0.00 days</text>
<rect x="38" y="590" width="92" height="22" rx="4" fill="#f5f5f5" />
<rect x="134" y="590" width="205" height="22" rx="4" fill="#f5f5f5" />
<rect x="343" y="590" width="308" height="22" rx="4" fill="#f5f5f5" />
<rect x="655" y="590" width="91" height="22" rx="4" fill="#f5f5f5" />
<rect x="751" y="590" width="91" height="22" rx="4" fill="#f5f5f5" />
<rect x="847" y="590" width="88" height="22" rx="5" fill="#f5f5f5" />
<rect x="43.5" y="598.5" width="13" height="5.5" rx="0.8" fill="#3d9ad6" stroke="#1a1a1a" stroke-width="1"/>
<path d="M52 603 L58 606 L52 609 Z" fill="#f5c235" stroke="none" stroke-width="1" />
<text x="62" y="605.5" font-size="12" fill="#111" font-weight="normal" text-anchor="start" textLength="56.94" lengthAdjust="spacingAndGlyphs" >1.2.1.1.7.1.2</text>
<text x="137" y="605.5" font-size="12.3" fill="#111" font-weight="normal" text-anchor="start" textLength="115.6" lengthAdjust="spacingAndGlyphs" >Reinforce walls ( » 28)</text>
<text x="658" y="605.5" font-size="12" fill="#111" font-weight="normal" text-anchor="start" textLength="54" lengthAdjust="spacingAndGlyphs" >04.02.2026</text>
<text x="754" y="605.5" font-size="12" fill="#111" font-weight="normal" text-anchor="start" textLength="54" lengthAdjust="spacingAndGlyphs" >04.02.2026</text>
<text x="850" y="605.5" font-size="12" fill="#111" font-weight="normal" text-anchor="start" textLength="49" lengthAdjust="spacingAndGlyphs" >0.00 days</text>
<rect x="38" y="616" width="92" height="22" rx="4" fill="#f5f5f5" />
<rect x="134" y="616" width="205" height="22" rx="4" fill="#f5f5f5" />
<rect x="343" y="616" width="308" height="22" rx="4" fill="#f5f5f5" />
<rect x="655" y="616" width="91" height="22" rx="4" fill="#f5f5f5" />
<rect x="751" y="616" width="91" height="22" rx="4" fill="#f5f5f5" />
<rect x="847" y="616" width="88" height="22" rx="5" fill="#f5f5f5" />
<rect x="43.5" y="624.5" width="13" height="5.5" rx="0.8" fill="#3d9ad6" stroke="#1a1a1a" stroke-width="1"/>
<path d="M52 629 L58 632 L52 635 Z" fill="#f5c235" stroke="none" stroke-width="1" />
<text x="62" y="631.5" font-size="12" fill="#111" font-weight="normal" text-anchor="start" textLength="56.94" lengthAdjust="spacingAndGlyphs" >1.2.1.1.7.1.3</text>
<text x="137" y="631.5" font-size="12.3" fill="#111" font-weight="normal" text-anchor="start" textLength="107.2" lengthAdjust="spacingAndGlyphs" >Concrete wall ( » 28)</text>
<text x="658" y="631.5" font-size="12" fill="#111" font-weight="normal" text-anchor="start" textLength="54" lengthAdjust="spacingAndGlyphs" >04.02.2026</text>
<text x="754" y="631.5" font-size="12" fill="#111" font-weight="normal" text-anchor="start" textLength="54" lengthAdjust="spacingAndGlyphs" >04.02.2026</text>
<text x="850" y="631.5" font-size="12" fill="#111" font-weight="normal" text-anchor="start" textLength="49" lengthAdjust="spacingAndGlyphs" >0.67 days</text>
<rect x="23" y="642" width="107" height="22" rx="4" fill="#f5f5f5" />
<rect x="134" y="642" width="205" height="22" rx="4" fill="#f5f5f5" />
<rect x="343" y="642" width="308" height="22" rx="4" fill="#f5f5f5" />
<rect x="655" y="642" width="91" height="22" rx="4" fill="#f5f5f5" />
<rect x="751" y="642" width="91" height="22" rx="4" fill="#f5f5f5" />
<rect x="847" y="642" width="88" height="22" rx="5" fill="#f5f5f5" />
<path d="M11 650.5 L15 654.5 L19 650.5" fill="none" stroke="#222" stroke-width="1.8" />
<rect x="28.5" y="650.5" width="13" height="5.5" rx="0.8" fill="#3d9ad6" stroke="#1a1a1a" stroke-width="1"/>
<path d="M37 655 L43 658 L37 661 Z" fill="#f5c235" stroke="none" stroke-width="1" />
<text x="47" y="657.5" font-size="12.2" fill="#000" font-weight="bold" text-anchor="start" textLength="56.099999999999994" lengthAdjust="spacingAndGlyphs" >1.2.1.1.7.2</text>
<text x="137" y="657.5" font-size="12.5" fill="#000" font-weight="bold" text-anchor="start" textLength="93.2" lengthAdjust="spacingAndGlyphs" >Precast columns</text>
<text x="658" y="658.0" font-size="14" fill="#3b8ed6" font-weight="bold" text-anchor="start" textLength="72" lengthAdjust="spacingAndGlyphs" >04.02.2026</text>
<text x="754" y="658.0" font-size="14" fill="#3b8ed6" font-weight="bold" text-anchor="start" textLength="72" lengthAdjust="spacingAndGlyphs" >09.02.2026</text>
<text x="850" y="657.5" font-size="12" fill="#111" font-weight="normal" text-anchor="start" textLength="49" lengthAdjust="spacingAndGlyphs" >3.00 days</text>
<rect x="38" y="668" width="92" height="22" rx="4" fill="#f5f5f5" />
<rect x="134" y="668" width="205" height="22" rx="4" fill="#f5f5f5" />
<rect x="343" y="668" width="308" height="22" rx="4" fill="#f5f5f5" />
<rect x="655" y="668" width="91" height="22" rx="4" fill="#f5f5f5" />
<rect x="751" y="668" width="91" height="22" rx="4" fill="#f5f5f5" />
<rect x="847" y="668" width="88" height="22" rx="5" fill="#f5f5f5" />
<rect x="43.5" y="676.5" width="13" height="5.5" rx="0.8" fill="#3d9ad6" stroke="#1a1a1a" stroke-width="1"/>
<path d="M52 681 L58 684 L52 687 Z" fill="#f5c235" stroke="none" stroke-width="1" />
<text x="62" y="683.5" font-size="12" fill="#111" font-weight="normal" text-anchor="start" textLength="56.94" lengthAdjust="spacingAndGlyphs" >1.2.1.1.7.2.1</text>
<text x="137" y="683.5" font-size="12.3" fill="#111" font-weight="normal" text-anchor="start" textLength="160.7" lengthAdjust="spacingAndGlyphs" >Deliver precast columns ( » 24)</text>
<text x="658" y="683.5" font-size="12" fill="#111" font-weight="normal" text-anchor="start" textLength="54" lengthAdjust="spacingAndGlyphs" >04.02.2026</text>
<text x="754" y="683.5" font-size="12" fill="#111" font-weight="normal" text-anchor="start" textLength="54" lengthAdjust="spacingAndGlyphs" >06.02.2026</text>
<text x="850" y="683.5" font-size="12" fill="#111" font-weight="normal" text-anchor="start" textLength="49" lengthAdjust="spacingAndGlyphs" >1.80 days</text>
<rect x="38" y="694" width="92" height="22" rx="4" fill="#f5f5f5" />
<rect x="134" y="694" width="205" height="22" rx="4" fill="#f5f5f5" />
<rect x="343" y="694" width="308" height="22" rx="4" fill="#f5f5f5" />
<rect x="655" y="694" width="91" height="22" rx="4" fill="#f5f5f5" />
<rect x="751" y="694" width="91" height="22" rx="4" fill="#f5f5f5" />
<rect x="847" y="694" width="88" height="22" rx="5" fill="#f5f5f5" />
<rect x="43.5" y="702.5" width="13" height="5.5" rx="0.8" fill="#3d9ad6" stroke="#1a1a1a" stroke-width="1"/>
<path d="M52 707 L58 710 L52 713 Z" fill="#f5c235" stroke="none" stroke-width="1" />
<text x="62" y="709.5" font-size="12" fill="#111" font-weight="normal" text-anchor="start" textLength="56.94" lengthAdjust="spacingAndGlyphs" >1.2.1.1.7.2.2</text>
<text x="137" y="709.5" font-size="12.3" fill="#111" font-weight="normal" text-anchor="start" textLength="155.0" lengthAdjust="spacingAndGlyphs" >Install precast columns ( » 24)</text>
<text x="658" y="709.5" font-size="12" fill="#111" font-weight="normal" text-anchor="start" textLength="54" lengthAdjust="spacingAndGlyphs" >06.02.2026</text>
<text x="754" y="709.5" font-size="12" fill="#111" font-weight="normal" text-anchor="start" textLength="54" lengthAdjust="spacingAndGlyphs" >06.02.2026</text>
<text x="850" y="709.5" font-size="12" fill="#111" font-weight="normal" text-anchor="start" textLength="49" lengthAdjust="spacingAndGlyphs" >0.60 days</text>
<rect x="38" y="720" width="92" height="22" rx="4" fill="#f5f5f5" />
<rect x="134" y="720" width="205" height="22" rx="4" fill="#f5f5f5" />
<rect x="343" y="720" width="308" height="22" rx="4" fill="#f5f5f5" />
<rect x="655" y="720" width="91" height="22" rx="4" fill="#f5f5f5" />
<rect x="751" y="720" width="91" height="22" rx="4" fill="#f5f5f5" />
<rect x="847" y="720" width="88" height="22" rx="5" fill="#f5f5f5" />
<rect x="43.5" y="728.5" width="13" height="5.5" rx="0.8" fill="#3d9ad6" stroke="#1a1a1a" stroke-width="1"/>
<path d="M52 733 L58 736 L52 739 Z" fill="#f5c235" stroke="none" stroke-width="1" />
<text x="62" y="735.5" font-size="12" fill="#111" font-weight="normal" text-anchor="start" textLength="56.94" lengthAdjust="spacingAndGlyphs" >1.2.1.1.7.2.3</text>
<text x="137" y="735.5" font-size="12.3" fill="#111" font-weight="normal" text-anchor="start" textLength="167.9" lengthAdjust="spacingAndGlyphs" >Connect precast columns ( » 24)</text>
<text x="658" y="735.5" font-size="12" fill="#111" font-weight="normal" text-anchor="start" textLength="54" lengthAdjust="spacingAndGlyphs" >06.02.2026</text>
<text x="754" y="735.5" font-size="12" fill="#111" font-weight="normal" text-anchor="start" textLength="54" lengthAdjust="spacingAndGlyphs" >09.02.2026</text>
<text x="850" y="735.5" font-size="12" fill="#111" font-weight="normal" text-anchor="start" textLength="49" lengthAdjust="spacingAndGlyphs" >0.60 days</text>
<rect x="23" y="746" width="107" height="22" rx="4" fill="#f5f5f5" />
<rect x="134" y="746" width="205" height="22" rx="4" fill="#f5f5f5" />
<rect x="343" y="746" width="308" height="22" rx="4" fill="#f5f5f5" />
<rect x="655" y="746" width="91" height="22" rx="4" fill="#f5f5f5" />
<rect x="751" y="746" width="91" height="22" rx="4" fill="#f5f5f5" />
<rect x="847" y="746" width="88" height="22" rx="5" fill="#f5f5f5" />
<path d="M11 754.5 L15 758.5 L19 754.5" fill="none" stroke="#222" stroke-width="1.8" />
<rect x="28.5" y="754.5" width="13" height="5.5" rx="0.8" fill="#3d9ad6" stroke="#1a1a1a" stroke-width="1"/>
<path d="M37 759 L43 762 L37 765 Z" fill="#f5c235" stroke="none" stroke-width="1" />
<text x="47" y="761.5" font-size="12.2" fill="#000" font-weight="bold" text-anchor="start" textLength="56.099999999999994" lengthAdjust="spacingAndGlyphs" >1.2.1.1.7.3</text>
<text x="137" y="761.5" font-size="12.5" fill="#000" font-weight="bold" text-anchor="start" textLength="82.2" lengthAdjust="spacingAndGlyphs" >Precast beams</text>
<text x="658" y="762.0" font-size="14" fill="#3b8ed6" font-weight="bold" text-anchor="start" textLength="72" lengthAdjust="spacingAndGlyphs" >09.02.2026</text>
<text x="754" y="762.0" font-size="14" fill="#3b8ed6" font-weight="bold" text-anchor="start" textLength="72" lengthAdjust="spacingAndGlyphs" >16.02.2026</text>
<text x="850" y="761.5" font-size="12" fill="#111" font-weight="normal" text-anchor="start" textLength="49" lengthAdjust="spacingAndGlyphs" >5.24 days</text>
<rect x="38" y="772" width="92" height="22" rx="4" fill="#f5f5f5" />
<rect x="134" y="772" width="205" height="22" rx="4" fill="#f5f5f5" />
<rect x="343" y="772" width="308" height="22" rx="4" fill="#f5f5f5" />
<rect x="655" y="772" width="91" height="22" rx="4" fill="#f5f5f5" />
<rect x="751" y="772" width="91" height="22" rx="4" fill="#f5f5f5" />
<rect x="847" y="772" width="88" height="22" rx="5" fill="#f5f5f5" />
<rect x="43.5" y="780.5" width="13" height="5.5" rx="0.8" fill="#3d9ad6" stroke="#1a1a1a" stroke-width="1"/>
<path d="M52 785 L58 788 L52 791 Z" fill="#f5c235" stroke="none" stroke-width="1" />
<text x="62" y="787.5" font-size="12" fill="#111" font-weight="normal" text-anchor="start" textLength="56.94" lengthAdjust="spacingAndGlyphs" >1.2.1.1.7.3.1</text>
<text x="137" y="787.5" font-size="12.3" fill="#111" font-weight="normal" text-anchor="start" textLength="152.4" lengthAdjust="spacingAndGlyphs" >Deliver precast beams ( » 43)</text>
<text x="658" y="787.5" font-size="12" fill="#111" font-weight="normal" text-anchor="start" textLength="54" lengthAdjust="spacingAndGlyphs" >09.02.2026</text>
<text x="754" y="787.5" font-size="12" fill="#111" font-weight="normal" text-anchor="start" textLength="54" lengthAdjust="spacingAndGlyphs" >12.02.2026</text>
<text x="850" y="787.5" font-size="12" fill="#111" font-weight="normal" text-anchor="start" textLength="49" lengthAdjust="spacingAndGlyphs" >3.23 days</text>
<rect x="38" y="798" width="92" height="22" rx="4" fill="#f5f5f5" />
<rect x="134" y="798" width="205" height="22" rx="4" fill="#f5f5f5" />
<rect x="343" y="798" width="308" height="22" rx="4" fill="#f5f5f5" />
<rect x="655" y="798" width="91" height="22" rx="4" fill="#f5f5f5" />
<rect x="751" y="798" width="91" height="22" rx="4" fill="#f5f5f5" />
<rect x="847" y="798" width="88" height="22" rx="5" fill="#f5f5f5" />
<rect x="43.5" y="806.5" width="13" height="5.5" rx="0.8" fill="#3d9ad6" stroke="#1a1a1a" stroke-width="1"/>
<path d="M52 811 L58 814 L52 817 Z" fill="#f5c235" stroke="none" stroke-width="1" />
<text x="62" y="813.5" font-size="12" fill="#111" font-weight="normal" text-anchor="start" textLength="56.94" lengthAdjust="spacingAndGlyphs" >1.2.1.1.7.3.2</text>
<text x="137" y="813.5" font-size="12.3" fill="#111" font-weight="normal" text-anchor="start" textLength="146.6" lengthAdjust="spacingAndGlyphs" >Install precast beams ( » 43)</text>
<text x="658" y="813.5" font-size="12" fill="#111" font-weight="normal" text-anchor="start" textLength="54" lengthAdjust="spacingAndGlyphs" >12.02.2026</text>
<text x="754" y="813.5" font-size="12" fill="#111" font-weight="normal" text-anchor="start" textLength="54" lengthAdjust="spacingAndGlyphs" >13.02.2026</text>
<text x="850" y="813.5" font-size="12" fill="#111" font-weight="normal" text-anchor="start" textLength="49" lengthAdjust="spacingAndGlyphs" >0.94 days</text>
<rect x="38" y="824" width="92" height="22" rx="4" fill="#f5f5f5" />
<rect x="134" y="824" width="205" height="22" rx="4" fill="#f5f5f5" />
<rect x="343" y="824" width="308" height="22" rx="4" fill="#f5f5f5" />
<rect x="655" y="824" width="91" height="22" rx="4" fill="#f5f5f5" />
<rect x="751" y="824" width="91" height="22" rx="4" fill="#f5f5f5" />
<rect x="847" y="824" width="88" height="22" rx="5" fill="#f5f5f5" />
<rect x="43.5" y="832.5" width="13" height="5.5" rx="0.8" fill="#3d9ad6" stroke="#1a1a1a" stroke-width="1"/>
<path d="M52 837 L58 840 L52 843 Z" fill="#f5c235" stroke="none" stroke-width="1" />
<text x="62" y="839.5" font-size="12" fill="#111" font-weight="normal" text-anchor="start" textLength="56.94" lengthAdjust="spacingAndGlyphs" >1.2.1.1.7.3.3</text>
<text x="137" y="839.5" font-size="12.3" fill="#111" font-weight="normal" text-anchor="start" textLength="159.5" lengthAdjust="spacingAndGlyphs" >Connect precast beams ( » 43)</text>
<text x="658" y="839.5" font-size="12" fill="#111" font-weight="normal" text-anchor="start" textLength="54" lengthAdjust="spacingAndGlyphs" >13.02.2026</text>
<text x="754" y="839.5" font-size="12" fill="#111" font-weight="normal" text-anchor="start" textLength="54" lengthAdjust="spacingAndGlyphs" >16.02.2026</text>
<text x="850" y="839.5" font-size="12" fill="#111" font-weight="normal" text-anchor="start" textLength="49" lengthAdjust="spacingAndGlyphs" >1.07 days</text>
<rect x="23" y="850" width="107" height="22" rx="4" fill="#f5f5f5" />
<rect x="134" y="850" width="205" height="22" rx="4" fill="#f5f5f5" />
<rect x="343" y="850" width="308" height="22" rx="4" fill="#f5f5f5" />
<rect x="655" y="850" width="91" height="22" rx="4" fill="#f5f5f5" />
<rect x="751" y="850" width="91" height="22" rx="4" fill="#f5f5f5" />
<rect x="847" y="850" width="88" height="22" rx="5" fill="#f5f5f5" />
<path d="M11 858.5 L15 862.5 L19 858.5" fill="none" stroke="#222" stroke-width="1.8" />
<rect x="28.5" y="858.5" width="13" height="5.5" rx="0.8" fill="#3d9ad6" stroke="#1a1a1a" stroke-width="1"/>
<path d="M37 863 L43 866 L37 869 Z" fill="#f5c235" stroke="none" stroke-width="1" />
<text x="47" y="865.5" font-size="12.2" fill="#000" font-weight="bold" text-anchor="start" textLength="56.099999999999994" lengthAdjust="spacingAndGlyphs" >1.2.1.1.7.4</text>
<text x="137" y="865.5" font-size="12.5" fill="#000" font-weight="bold" text-anchor="start" textLength="113.2" lengthAdjust="spacingAndGlyphs" >In-situ concrete slab</text>
<text x="658" y="866.0" font-size="14" fill="#3b8ed6" font-weight="bold" text-anchor="start" textLength="72" lengthAdjust="spacingAndGlyphs" >17.02.2026</text>
<text x="754" y="866.0" font-size="14" fill="#3b8ed6" font-weight="bold" text-anchor="start" textLength="72" lengthAdjust="spacingAndGlyphs" >27.02.2026</text>
<text x="850" y="865.5" font-size="12" fill="#111" font-weight="normal" text-anchor="start" textLength="49" lengthAdjust="spacingAndGlyphs" >7.55 days</text>
<rect x="38" y="876" width="92" height="22" rx="4" fill="#f5f5f5" />
<rect x="134" y="876" width="205" height="22" rx="4" fill="#f5f5f5" />
<rect x="343" y="876" width="308" height="22" rx="4" fill="#f5f5f5" />
<rect x="655" y="876" width="91" height="22" rx="4" fill="#f5f5f5" />
<rect x="751" y="876" width="91" height="22" rx="4" fill="#f5f5f5" />
<rect x="847" y="876" width="88" height="22" rx="5" fill="#f5f5f5" />
<rect x="43.5" y="884.5" width="13" height="5.5" rx="0.8" fill="#3d9ad6" stroke="#1a1a1a" stroke-width="1"/>
<path d="M52 889 L58 892 L52 895 Z" fill="#f5c235" stroke="none" stroke-width="1" />
<text x="62" y="891.5" font-size="12" fill="#111" font-weight="normal" text-anchor="start" textLength="56.94" lengthAdjust="spacingAndGlyphs" >1.2.1.1.7.4.1</text>
<text x="137" y="891.5" font-size="12.3" fill="#111" font-weight="normal" text-anchor="start" textLength="188.5" lengthAdjust="spacingAndGlyphs" >Formwork in-situ concrete slab ( » 2)</text>
<text x="658" y="891.5" font-size="12" fill="#111" font-weight="normal" text-anchor="start" textLength="54" lengthAdjust="spacingAndGlyphs" >17.02.2026</text>
<text x="754" y="891.5" font-size="12" fill="#111" font-weight="normal" text-anchor="start" textLength="54" lengthAdjust="spacingAndGlyphs" >19.02.2026</text>
<text x="850" y="891.5" font-size="12" fill="#111" font-weight="normal" text-anchor="start" textLength="49" lengthAdjust="spacingAndGlyphs" >2.33 days</text>
<rect x="38" y="902" width="92" height="22" rx="4" fill="#f5f5f5" />
<rect x="134" y="902" width="205" height="22" rx="4" fill="#f5f5f5" />
<rect x="343" y="902" width="308" height="22" rx="4" fill="#f5f5f5" />
<rect x="655" y="902" width="91" height="22" rx="4" fill="#f5f5f5" />
<rect x="751" y="902" width="91" height="22" rx="4" fill="#f5f5f5" />
<rect x="847" y="902" width="88" height="22" rx="5" fill="#f5f5f5" />
<rect x="43.5" y="910.5" width="13" height="5.5" rx="0.8" fill="#3d9ad6" stroke="#1a1a1a" stroke-width="1"/>
<path d="M52 915 L58 918 L52 921 Z" fill="#f5c235" stroke="none" stroke-width="1" />
<text x="62" y="917.5" font-size="12" fill="#111" font-weight="normal" text-anchor="start" textLength="56.94" lengthAdjust="spacingAndGlyphs" >1.2.1.1.7.4.2</text>
<text x="137" y="917.5" font-size="12.3" fill="#111" font-weight="normal" text-anchor="start" textLength="186.6" lengthAdjust="spacingAndGlyphs" >Reinforce in-situ concrete slab ( » 2)</text>
<text x="658" y="917.5" font-size="12" fill="#111" font-weight="normal" text-anchor="start" textLength="54" lengthAdjust="spacingAndGlyphs" >19.02.2026</text>
<text x="754" y="917.5" font-size="12" fill="#111" font-weight="normal" text-anchor="start" textLength="54" lengthAdjust="spacingAndGlyphs" >25.02.2026</text>
<text x="850" y="917.5" font-size="12" fill="#111" font-weight="normal" text-anchor="start" textLength="49" lengthAdjust="spacingAndGlyphs" >3.73 days</text>
<rect x="38" y="928" width="92" height="22" rx="4" fill="#f5f5f5" />
<rect x="134" y="928" width="205" height="22" rx="4" fill="#f5f5f5" />
<rect x="343" y="928" width="308" height="22" rx="4" fill="#f5f5f5" />
<rect x="655" y="928" width="91" height="22" rx="4" fill="#f5f5f5" />
<rect x="751" y="928" width="91" height="22" rx="4" fill="#f5f5f5" />
<rect x="847" y="928" width="88" height="22" rx="5" fill="#f5f5f5" />
<rect x="43.5" y="936.5" width="13" height="5.5" rx="0.8" fill="#3d9ad6" stroke="#1a1a1a" stroke-width="1"/>
<path d="M52 941 L58 944 L52 947 Z" fill="#f5c235" stroke="none" stroke-width="1" />
<text x="62" y="943.5" font-size="12" fill="#111" font-weight="normal" text-anchor="start" textLength="56.94" lengthAdjust="spacingAndGlyphs" >1.2.1.1.7.4.3</text>
<text x="137" y="943.5" font-size="12.3" fill="#111" font-weight="normal" text-anchor="start" textLength="184.0" lengthAdjust="spacingAndGlyphs" >Concrete in-situ concrete slab ( » 2)</text>
<text x="658" y="943.5" font-size="12" fill="#111" font-weight="normal" text-anchor="start" textLength="54" lengthAdjust="spacingAndGlyphs" >25.02.2026</text>
<text x="754" y="943.5" font-size="12" fill="#111" font-weight="normal" text-anchor="start" textLength="54" lengthAdjust="spacingAndGlyphs" >27.02.2026</text>
<text x="850" y="943.5" font-size="12" fill="#111" font-weight="normal" text-anchor="start" textLength="49" lengthAdjust="spacingAndGlyphs" >1.49 days</text>
<rect x="23" y="954" width="107" height="22" rx="4" fill="#f5f5f5" />
<rect x="134" y="954" width="205" height="22" rx="4" fill="#f5f5f5" />
<rect x="343" y="954" width="308" height="22" rx="4" fill="#f5f5f5" />
<rect x="655" y="954" width="91" height="22" rx="4" fill="#f5f5f5" />
<rect x="751" y="954" width="91" height="22" rx="4" fill="#f5f5f5" />
<rect x="847" y="954" width="88" height="22" rx="5" fill="#f5f5f5" />
<path d="M11 962.5 L15 966.5 L19 962.5" fill="none" stroke="#222" stroke-width="1.8" />
<rect x="28.5" y="962.5" width="13" height="5.5" rx="0.8" fill="#3d9ad6" stroke="#1a1a1a" stroke-width="1"/>
<path d="M37 967 L43 970 L37 973 Z" fill="#f5c235" stroke="none" stroke-width="1" />
<text x="47" y="969.5" font-size="12.2" fill="#000" font-weight="bold" text-anchor="start" textLength="56.099999999999994" lengthAdjust="spacingAndGlyphs" >1.2.1.1.7.5</text>
<text x="137" y="969.5" font-size="12.5" fill="#000" font-weight="bold" text-anchor="start" textLength="70.5" lengthAdjust="spacingAndGlyphs" >Prefab stairs</text>
<text x="658" y="970.0" font-size="14" fill="#3b8ed6" font-weight="bold" text-anchor="start" textLength="72" lengthAdjust="spacingAndGlyphs" >02.03.2026</text>
<text x="754" y="970.0" font-size="14" fill="#3b8ed6" font-weight="bold" text-anchor="start" textLength="72" lengthAdjust="spacingAndGlyphs" >03.03.2026</text>
<text x="850" y="969.5" font-size="12" fill="#111" font-weight="normal" text-anchor="start" textLength="49" lengthAdjust="spacingAndGlyphs" >1.46 days</text>
<rect x="38" y="980" width="92" height="22" rx="4" fill="#f5f5f5" />
<rect x="134" y="980" width="205" height="22" rx="4" fill="#f5f5f5" />
<rect x="343" y="980" width="308" height="22" rx="4" fill="#f5f5f5" />
<rect x="655" y="980" width="91" height="22" rx="4" fill="#f5f5f5" />
<rect x="751" y="980" width="91" height="22" rx="4" fill="#f5f5f5" />
<rect x="847" y="980" width="88" height="22" rx="5" fill="#f5f5f5" />
<g clip-path="url(#gclip)">
<text x="422.5" y="347.5" font-size="11.8" fill="#7c7c7c" font-weight="normal" text-anchor="start" textLength="97.7" lengthAdjust="spacingAndGlyphs" >In-situ concrete slab</text>
<text x="365.5" y="373.5" font-size="11.8" fill="#7c7c7c" font-weight="normal" text-anchor="start" textLength="148.7" lengthAdjust="spacingAndGlyphs" >Formwork in-situ concrete slab</text>
<text x="408.5" y="399.5" font-size="11.8" fill="#7c7c7c" font-weight="normal" text-anchor="start" textLength="146.9" lengthAdjust="spacingAndGlyphs" >Reinforce in-situ concrete slab</text>
<text x="422.5" y="425.5" font-size="11.8" fill="#7c7c7c" font-weight="normal" text-anchor="start" textLength="144.5" lengthAdjust="spacingAndGlyphs" >Concrete in-situ concrete slab</text>
<text x="458" y="451.5" font-size="11.8" fill="#7c7c7c" font-weight="normal" text-anchor="start" textLength="61.3" lengthAdjust="spacingAndGlyphs" >Prefab stairs</text>
<text x="451.7" y="477.5" font-size="11.8" fill="#7c7c7c" font-weight="normal" text-anchor="start" textLength="97.1" lengthAdjust="spacingAndGlyphs" >Deliver prefab stairs</text>
<text x="457.6" y="503.5" font-size="11.8" fill="#7c7c7c" font-weight="normal" text-anchor="start" textLength="91.7" lengthAdjust="spacingAndGlyphs" >Install prefab stairs</text>
<text x="653" y="529.5" font-size="11.8" fill="#7c7c7c" font-weight="normal" text-anchor="start" textLength="52.2" lengthAdjust="spacingAndGlyphs" >fourth floor</text>
<text x="456" y="555.5" font-size="11.8" fill="#7c7c7c" font-weight="normal" text-anchor="start" textLength="80.1" lengthAdjust="spacingAndGlyphs" >Supporting walls</text>
<text x="456" y="581.5" font-size="11.8" fill="#7c7c7c" font-weight="normal" text-anchor="start" textLength="75.8" lengthAdjust="spacingAndGlyphs" >Formwork walls</text>
<text x="456" y="607.5" font-size="11.8" fill="#7c7c7c" font-weight="normal" text-anchor="start" textLength="74.1" lengthAdjust="spacingAndGlyphs" >Reinforce walls</text>
<text x="460" y="633.5" font-size="11.8" fill="#7c7c7c" font-weight="normal" text-anchor="start" textLength="66.2" lengthAdjust="spacingAndGlyphs" >Concrete wall</text>
<text x="493.7" y="659.5" font-size="11.8" fill="#7c7c7c" font-weight="normal" text-anchor="start" textLength="80.7" lengthAdjust="spacingAndGlyphs" >Precast columns</text>
<text x="471.5" y="685.5" font-size="11.8" fill="#7c7c7c" font-weight="normal" text-anchor="start" textLength="116.5" lengthAdjust="spacingAndGlyphs" >Deliver precast columns</text>
<text x="474.5" y="711.5" font-size="11.8" fill="#7c7c7c" font-weight="normal" text-anchor="start" textLength="111.1" lengthAdjust="spacingAndGlyphs" >Install precast columns</text>
<text x="493.7" y="737.5" font-size="11.8" fill="#7c7c7c" font-weight="normal" text-anchor="start" textLength="123.2" lengthAdjust="spacingAndGlyphs" >Connect precast columns</text>
<text x="544.5" y="763.5" font-size="11.8" fill="#7c7c7c" font-weight="normal" text-anchor="start" textLength="72.8" lengthAdjust="spacingAndGlyphs" >Precast beams</text>
<text x="516.3" y="789.5" font-size="11.8" fill="#7c7c7c" font-weight="normal" text-anchor="start" textLength="108.6" lengthAdjust="spacingAndGlyphs" >Deliver precast beams</text>
<text x="523.6" y="815.5" font-size="11.8" fill="#7c7c7c" font-weight="normal" text-anchor="start" textLength="103.2" lengthAdjust="spacingAndGlyphs" >Install precast beams</text>
<text x="544.6" y="841.5" font-size="11.8" fill="#7c7c7c" font-weight="normal" text-anchor="start" textLength="109.9" lengthAdjust="spacingAndGlyphs" >Connect precast bea...</text>
<text x="623.6" y="867.5" font-size="11.8" fill="#7c7c7c" font-weight="normal" text-anchor="start" textLength="29.7" lengthAdjust="spacingAndGlyphs" >In-si...</text>
<text x="567.5" y="893.5" font-size="11.8" fill="#7c7c7c" font-weight="normal" text-anchor="start" textLength="83.7" lengthAdjust="spacingAndGlyphs" >Formwork in-sit...</text>
<text x="610.5" y="919.5" font-size="11.8" fill="#7c7c7c" font-weight="normal" text-anchor="start" textLength="40.7" lengthAdjust="spacingAndGlyphs" >Reinfo...</text>
<text x="623.6" y="945.5" font-size="11.8" fill="#7c7c7c" font-weight="normal" text-anchor="start" textLength="29.1" lengthAdjust="spacingAndGlyphs" >Con...</text>
<path d="M433.5 330 V985" fill="none" stroke="#4a8fd3" stroke-width="1.2" />
<path d="M634.8 330 V985" fill="none" stroke="#4a8fd3" stroke-width="1.2" />
<path d="M343 332.5 H417.5 V354.5 L409.5 345 H351 L343 354.5 Z" fill="#525252" stroke="none" stroke-width="1" />
<rect x="343" y="358.5" width="17.5" height="20.5" rx="0" fill="#428bcc" />
<rect x="361.5" y="384.5" width="42.0" height="20.5" rx="0" fill="#428bcc" />
<rect x="404.5" y="410.5" width="13.0" height="20.5" rx="0" fill="#428bcc" />
<path d="M439 436.5 H453 V458.5 L446.0 449 H446.0 L439 458.5 Z" fill="#525252" stroke="none" stroke-width="1" />
<rect x="439.3" y="462.5" width="7.399999999999977" height="20.5" rx="0" fill="#428bcc" />
<rect x="447.6" y="488.5" width="5.0" height="20.5" rx="0" fill="#428bcc" />
<path d="M453.4 514.5 H648 V536.5 L640 527 H461.4 L453.4 536.5 Z" fill="#525252" stroke="none" stroke-width="1" />
<path d="M454 543 V560" fill="none" stroke="#444" stroke-width="1.5" />
<path d="M448 557 L453 557 L453 562 Z M460 557 L455 557 L455 562 Z" fill="#444" stroke="none" stroke-width="1" />
<path d="M452 565 L463 575.5 L452 586 L441 575.5 Z" fill="#428bcc" stroke="none" stroke-width="1" />
<path d="M452 591 L463 601.5 L452 612 L441 601.5 Z" fill="#428bcc" stroke="none" stroke-width="1" />
<rect x="453" y="618.5" width="1.8" height="20.5" rx="0" fill="#a9cbee" />
<path d="M453.3 644.5 H488.7 V666.5 L480.7 657 H461.3 L453.3 666.5 Z" fill="#525252" stroke="none" stroke-width="1" />
<rect x="453.3" y="670.5" width="13.199999999999989" height="20.5" rx="0" fill="#428bcc" />
<rect x="467.5" y="696.5" width="1.8" height="20.5" rx="0" fill="#a9cbee" />
<rect x="469" y="722.5" width="19.69999999999999" height="20.5" rx="0" fill="#428bcc" />
<path d="M489 748.5 H539.5 V770.5 L531.5 761 H497 L489 770.5 Z" fill="#525252" stroke="none" stroke-width="1" />
<rect x="489" y="774.5" width="22.30000000000001" height="20.5" rx="0" fill="#428bcc" />
<rect x="512.5" y="800.5" width="6.100000000000023" height="20.5" rx="0" fill="#428bcc" />
<rect x="519.7" y="826.5" width="19.899999999999977" height="20.5" rx="0" fill="#428bcc" />
<path d="M548.3 852.5 H618.6 V874.5 L610.6 865 H556.3 L548.3 874.5 Z" fill="#525252" stroke="none" stroke-width="1" />
<rect x="548.3" y="878.5" width="14.200000000000045" height="20.5" rx="0" fill="#428bcc" />
<rect x="563.5" y="904.5" width="42.0" height="20.5" rx="0" fill="#428bcc" />
<rect x="606.5" y="930.5" width="12.100000000000023" height="20.5" rx="0" fill="#428bcc" />
<rect x="640.6" y="957" width="6.399999999999977" height="13" rx="0" fill="#525252" />
<path d="M640.6 971 L643.6 975 L640.6 979 Z M647 971 L644 975 L647 979 Z" fill="#525252" stroke="none" stroke-width="1" />
<rect x="641" y="981" width="2" height="6" rx="0" fill="#428bcc" />
</g>
</g>
<rect x="929" y="303" width="17" height="683" rx="4" fill="#e2e2e2" />
<path d="M932 314 L937 309 L942 314" fill="none" stroke="#222" stroke-width="2" />
<rect x="929" y="471" width="16" height="26" rx="4" fill="#a6a6a6" />
<path d="M932 975 L937 980 L942 975" fill="none" stroke="#222" stroke-width="2" />
<rect x="8" y="990" width="918" height="16" rx="4" fill="#e2e2e2" />
<rect x="88" y="990" width="781" height="16" rx="4" fill="#a0a0a0" />
<path d="M20 993 L15 998 L20 1003" fill="none" stroke="#222" stroke-width="2" />
<path d="M913 993 L918 998 L913 1003" fill="none" stroke="#222" stroke-width="2" />
<rect x="4" y="1014" width="944" height="31" rx="4" fill="#ffffff" />
<g transform="translate(22,1030)"><rect x="-7" y="-7" width="14" height="14" fill="none" stroke="#333" stroke-width="1.5"/><path d="M-7 3 H7" stroke="#333" stroke-width="1.5"/><path d="M-3 0 L0 -3.5 L3 0 Z" fill="#333"/></g>
<g transform="translate(807,1030)"><path d="M6 -7 H-6 L1 0 L-6 7 H6" fill="none" stroke="#222" stroke-width="2.2"/></g>
<g transform="translate(838,1030)"><path d="M-1 -6 A6 6 0 0 0 -1 6" fill="none" stroke="#222" stroke-width="1.6"/><path d="M-3 3 L1 6 L-2 9" fill="none" stroke="#222" stroke-width="1.4"/><rect x="2.5" y="-6.5" width="5" height="5" fill="none" stroke="#222" stroke-width="1.4"/><rect x="2" y="1" width="6" height="6" fill="#222"/></g>
<g transform="translate(869,1030)"><path d="M-1 -6 A6 6 0 0 0 -1 6" fill="none" stroke="#222" stroke-width="1.6"/><path d="M-3 3 L1 6 L-2 9" fill="none" stroke="#222" stroke-width="1.4"/><rect x="2.5" y="-6.5" width="5" height="5" fill="none" stroke="#222" stroke-width="1.4"/><ellipse cx="5" cy="4" rx="4" ry="2.5" fill="none" stroke="#222" stroke-width="1.4"/><circle cx="5" cy="4" r="1" fill="#222"/></g>
<g transform="translate(900,1030)"><rect x="-7" y="-8" width="4" height="4" fill="none" stroke="#222" stroke-width="1.4"/><path d="M-5 -4 V6 H1 M-5 0 H1" fill="none" stroke="#222" stroke-width="1.4"/><rect x="2" y="-2" width="4" height="4" fill="none" stroke="#222" stroke-width="1.4"/><rect x="2" y="4" width="4" height="4" fill="none" stroke="#222" stroke-width="1.4"/></g>
<g transform="translate(931,1030)"><rect x="-5" y="-8" width="4" height="4" fill="none" stroke="#222" stroke-width="1.4"/><path d="M-3 -4 V2 M-3 0 H2" fill="none" stroke="#222" stroke-width="1.4"/><circle cx="-5" cy="5" r="3.2" fill="none" stroke="#222" stroke-width="1.4"/><path d="M-6.5 3.5 L-3.5 6.5 M-3.5 3.5 L-6.5 6.5" stroke="#222" stroke-width="1"/><rect x="3" y="-2" width="4" height="4" fill="none" stroke="#222" stroke-width="1.4"/><rect x="3" y="4" width="4" height="4" fill="none" stroke="#222" stroke-width="1.4"/></g>
<rect x="954" y="132" width="76" height="28" rx="4" fill="#ffffff" />
<text x="966" y="151" font-size="12.5" fill="#000" font-weight="normal" text-anchor="start" textLength="51" lengthAdjust="spacingAndGlyphs" >Viewport</text>
<path d="M1863 144 L1873 144 L1868 149 Z" fill="#111" stroke="none" stroke-width="1" />
<g transform="translate(1887,146)"><rect x="-4" y="-1" width="6" height="5" fill="none" stroke="#111" stroke-width="1.5"/><path d="M-2 -1 V-4 H4 V1 H2" fill="none" stroke="#111" stroke-width="1.5"/></g>
<path d="M1902 142 L1910 150 M1910 142 L1902 150" fill="none" stroke="#aaa" stroke-width="1.3" />
<rect x="954" y="164" width="961" height="32" rx="4" fill="#ffffff" />
<rect x="958" y="168" width="27" height="24" rx="4" fill="#e5f8c6" />
<g transform="translate(971,180)"><path d="M-4.5 -7 L5 1 L0.5 1.5 L3 6.5 L1 7.5 L-1.5 2.5 L-4.5 5 Z" fill="none" stroke="#1a1a1a" stroke-width="1.4" stroke-linejoin="round"/></g>
<g transform="translate(1000,180)"><ellipse cx="-3" cy="-3" rx="3" ry="4.5" fill="none" stroke="#1a1a1a" stroke-width="1.5"/><ellipse cx="3" cy="3" rx="3" ry="4.5" fill="none" stroke="#1a1a1a" stroke-width="1.5"/></g>
<g transform="translate(1028,180)"><circle cx="-1.5" cy="-1.5" r="5" fill="none" stroke="#1a1a1a" stroke-width="1.8"/><path d="M2 2 L7 7" stroke="#1a1a1a" stroke-width="2"/></g>
<g transform="translate(1057,180)"><path d="M-4 -7 H4 M-2.5 -7 V0 M2.5 -7 V0 M-5 0 H5 M0 0 V8" fill="none" stroke="#1a1a1a" stroke-width="1.6"/></g>
<g transform="translate(1086,180)"><circle cx="-4.5" cy="5" r="2.5" fill="none" stroke="#1a1a1a" stroke-width="1.5"/><circle cx="4.5" cy="5" r="2.5" fill="none" stroke="#1a1a1a" stroke-width="1.5"/><path d="M-3 3 L6 -7 M3 3 L-6 -7" stroke="#1a1a1a" stroke-width="1.6"/></g>
<g transform="translate(1115,180)"><path d="M-6 -6 L6 4 L3 8 L-4 2 Z M-6 -6 L-3 -8" fill="none" stroke="#1a1a1a" stroke-width="1.6" stroke-linejoin="round"/></g>
<g transform="translate(1144,180)"><path d="M-6 7 L-7 4 L4 -7 L7 -4 L-4 7 Z M-5 4 L6 -6" fill="none" stroke="#1a1a1a" stroke-width="1.4"/></g>
<g transform="translate(1174,180)"><circle cy="-6" r="1.5" fill="none" stroke="#1a1a1a" stroke-width="1.3"/><path d="M-1 -4.5 L-5 8 M1 -4.5 L5 8 M-3 2 H3" stroke="#1a1a1a" stroke-width="1.6"/></g>
<line x1="1193" y1="170" x2="1193" y2="192" stroke="#bbb" stroke-width="1" stroke-dasharray="1.5,1.5"/>
<g transform="translate(1211,180)"><path d="M-8 0 Q0 -8 8 0 Q0 8 -8 0 Z" fill="none" stroke="#1a1a1a" stroke-width="1.6"/><circle r="2.8" fill="none" stroke="#1a1a1a" stroke-width="1.6"/></g>
<line x1="1230" y1="170" x2="1230" y2="192" stroke="#bbb" stroke-width="1" stroke-dasharray="1.5,1.5"/>
<g transform="translate(1247,180)"><rect x="-8" y="-6" width="11" height="12" rx="1" fill="none" stroke="#1a1a1a" stroke-width="1.7"/><path d="M3 -1 L8 -5 V5 L3 1 Z" fill="#1a1a1a"/></g>
<g transform="translate(1277,180)"><path d="M-8 -4 V-8 H-4 M4 -8 H8 V-4 M8 4 V8 H4 M-4 8 H-8 V4" fill="none" stroke="#1a1a1a" stroke-width="1.6"/><path d="M0 -5 L4.5 -2.5 V2.5 L0 5 L-4.5 2.5 V-2.5 Z M-4.5 -2.5 L0 0 L4.5 -2.5 M0 0 V5" fill="none" stroke="#1a1a1a" stroke-width="1.4"/></g>
<g transform="translate(1306,180)"><path d="M-3 4 Q-8 2 -7 -1 Q-5 -5 2 -5 Q8 -4 8 0 Q7 3 2 4" fill="none" stroke="#1a1a1a" stroke-width="1.6"/><path d="M-1 1 L-4 4 L-1 7" fill="none" stroke="#1a1a1a" stroke-width="1.6"/></g>
<line x1="1325" y1="170" x2="1325" y2="192" stroke="#bbb" stroke-width="1" stroke-dasharray="1.5,1.5"/>
<g transform="translate(1343,180)"><path d="M-1 -8 V8 M-1 -7 H6 V7 H-1" fill="none" stroke="#1a1a1a" stroke-width="1.8"/><path d="M-3 -7 H-7 V7 H-3" fill="none" stroke="#1a1a1a" stroke-width="1.4" stroke-dasharray="1.5,1.5"/></g>
<line x1="1362" y1="170" x2="1362" y2="192" stroke="#bbb" stroke-width="1" stroke-dasharray="1.5,1.5"/>
<g transform="translate(1379,180)"><path d="M-3 8 L0 -1 L1 8 M0 -1 V-8 M-3 -5 L0 -8 L3 -5" fill="none" stroke="#1a1a1a" stroke-width="1.6"/></g>
<line x1="1398" y1="170" x2="1398" y2="192" stroke="#bbb" stroke-width="1" stroke-dasharray="1.5,1.5"/>
<g transform="translate(1416,180)"><path d="M-8 0 L0 -7 L8 0 M-5.5 -2 V7 H-1.5 V2 H1.5 V7 H5.5 V-2" fill="none" stroke="#1a1a1a" stroke-width="1.7" stroke-linejoin="round"/></g>
<line x1="1435" y1="170" x2="1435" y2="192" stroke="#bbb" stroke-width="1" stroke-dasharray="1.5,1.5"/>
<rect x="1441" y="168" width="240" height="24" rx="4" fill="#e3e3e3" />
<text x="1445" y="185" font-size="12.5" fill="#000" font-weight="normal" text-anchor="start" textLength="60" lengthAdjust="spacingAndGlyphs" >Simulation</text>
<line x1="1685" y1="170" x2="1685" y2="192" stroke="#bbb" stroke-width="1" stroke-dasharray="1.5,1.5"/>
<g transform="translate(1704,180)"><polygon points="5.55,-1.70 7.90,-1.25 7.90,1.25 5.55,1.70 5.12,2.72 6.47,4.70 4.70,6.47 2.72,5.12 1.70,5.55 1.25,7.90 -1.25,7.90 -1.70,5.55 -2.72,5.12 -4.70,6.47 -6.47,4.70 -5.12,2.72 -5.55,1.70 -7.90,1.25 -7.90,-1.25 -5.55,-1.70 -5.12,-2.72 -6.47,-4.70 -4.70,-6.47 -2.72,-5.12 -1.70,-5.55 -1.25,-7.90 1.25,-7.90 1.70,-5.55 2.72,-5.12 4.70,-6.47 6.47,-4.70 5.12,-2.72" fill="none" stroke="#1a1a1a" stroke-width="1.5" stroke-linejoin="round"/><circle r="2.6" fill="#1a1a1a"/></g>
<line x1="1722" y1="170" x2="1722" y2="192" stroke="#bbb" stroke-width="1" stroke-dasharray="1.5,1.5"/>
<g transform="translate(1741,180)"><path d="M-8 -4 H-4 L-2 -7 H2 L4 -4 H8 V7 H-8 Z" fill="none" stroke="#1a1a1a" stroke-width="1.7" stroke-linejoin="round"/><circle cy="1" r="3.3" fill="none" stroke="#1a1a1a" stroke-width="1.7"/></g>
<rect x="954" y="200" width="32" height="845" rx="4" fill="#ffffff" />
<g transform="translate(970,216)"><rect x="-7" y="-7" width="14" height="14" fill="none" stroke="#1a1a1a" stroke-width="1.4" stroke-dasharray="1.5,1.5"/><rect x="-4" y="-4" width="8" height="8" fill="none" stroke="#1a1a1a" stroke-width="1.6"/></g>
<g transform="translate(970,246)"><rect x="-7" y="-7" width="14" height="14" fill="none" stroke="#1a1a1a" stroke-width="1.4" stroke-dasharray="1.5,1.5"/><path d="M0 0 L6 6 M6 0 L0 6" stroke="#fff" stroke-width="4"/><path d="M0 0 L6 6 M6 0 L0 6" stroke="#1a1a1a" stroke-width="1.6"/></g>
<line x1="960" y1="264.5" x2="981" y2="264.5" stroke="#aaa" stroke-dasharray="1.5,1.5"/>
<g transform="translate(970,283)"><path d="M-7 -3 V-7 H-3 M3 -7 H7 V-3 M7 3 V7 H3 M-3 7 H-7 V3" fill="none" stroke="#1a1a1a" stroke-width="1.6"/><circle r="2.5" fill="none" stroke="#1a1a1a" stroke-width="1.6"/></g>
<line x1="960" y1="301.5" x2="981" y2="301.5" stroke="#aaa" stroke-dasharray="1.5,1.5"/>
<g transform="translate(970,320)"><path d="M-7 5 V-7 H7 V-1" fill="none" stroke="#1a1a1a" stroke-width="1.4" stroke-dasharray="1.5,1.5"/><path d="M-3 4.5 Q2.5 -1 8 4.5 Q2.5 10 -3 4.5 Z" fill="#fff" stroke="#1a1a1a" stroke-width="1.2"/><circle cx="2.5" cy="4.5" r="1.6" fill="none" stroke="#1a1a1a" stroke-width="1.1"/></g>
<g transform="translate(970,350)"><path d="M-7 5 V-7 H7 V-1" fill="none" stroke="#1a1a1a" stroke-width="1.4" stroke-dasharray="1.5,1.5"/><path d="M-3 4.5 Q2.5 -1 8 4.5 Q2.5 10 -3 4.5 Z" fill="#fff" stroke="#1a1a1a" stroke-width="1.2"/><path d="M-2 9 L7 0" stroke="#1a1a1a" stroke-width="1.2"/></g>
<defs><clipPath id="vp"><rect x="986" y="200" width="929" height="845"/></clipPath></defs>
<g clip-path="url(#vp)">
<polygon points="986,200 1915,200 1915,1045 986,1045" fill="#e0e0e0" />
<polygon points="1262,312 1301,312 1301,327 1262,327" fill="#f6f8f9" stroke="#6e6e6e" stroke-width="0.7" stroke-linejoin="round" />
<polygon points="1299,297 1323.5,297 1323.5,327 1299,327" fill="#ebedee" stroke="#6e6e6e" stroke-width="0.7" stroke-linejoin="round" />
<polygon points="1321,297 1356,297 1356,323 1321,323" fill="#f6f8f9" stroke="#6e6e6e" stroke-width="0.7" stroke-linejoin="round" />
<polygon points="1334,282 1398,280 1398,301 1334,301" fill="#f6f8f9" stroke="#6e6e6e" stroke-width="0.7" stroke-linejoin="round" />
<polyline points="1344,282 1344,301" fill="none" stroke="#6e6e6e" stroke-width="0.8" />
<polyline points="1352,282 1352,301" fill="none" stroke="#6e6e6e" stroke-width="0.8" />
<polyline points="1384,281 1384,301" fill="none" stroke="#6e6e6e" stroke-width="0.8" />
<polygon points="1368,298 1417,298 1418,323 1368,323" fill="#ebedee" stroke="#6e6e6e" stroke-width="0.7" stroke-linejoin="round" />
<polyline points="1372,299 1372,322" fill="none" stroke="#888" stroke-width="0.6" />
<polyline points="1377,299 1377,322" fill="none" stroke="#888" stroke-width="0.6" />
<polyline points="1382,299 1382,322" fill="none" stroke="#888" stroke-width="0.6" />
<polyline points="1387,299 1387,322" fill="none" stroke="#888" stroke-width="0.6" />
<polyline points="1392,299 1392,322" fill="none" stroke="#888" stroke-width="0.6" />
<polyline points="1397,299 1397,322" fill="none" stroke="#888" stroke-width="0.6" />
<polyline points="1402,299 1402,322" fill="none" stroke="#888" stroke-width="0.6" />
<polyline points="1407,299 1407,322" fill="none" stroke="#888" stroke-width="0.6" />
<polyline points="1412,299 1412,322" fill="none" stroke="#888" stroke-width="0.6" />
<polygon points="1463,307 1494,307 1494,321 1463,321" fill="#f6f8f9" stroke="#6e6e6e" stroke-width="0.7" stroke-linejoin="round" />
<polygon points="1601,312 1630,308 1669,310 1669,324 1601,326" fill="#f6f8f9" stroke="#6e6e6e" stroke-width="0.7" stroke-linejoin="round" />
<polygon points="1700,301 1762,298 1765,318 1700,320" fill="#f6f8f9" stroke="#6e6e6e" stroke-width="0.7" stroke-linejoin="round" />
<polygon points="1775,268 1831,268 1826,312 1772,314" fill="#ebedee" stroke="#6e6e6e" stroke-width="0.7" stroke-linejoin="round" />
<polyline points="1811,268 1807,312" fill="none" stroke="#6e6e6e" stroke-width="0.8" />
<polygon points="1836,297 1870,296 1870,314 1836,315" fill="#f6f8f9" stroke="#6e6e6e" stroke-width="0.7" stroke-linejoin="round" />
<polygon points="1873,294 1912,293 1915,311 1873,312" fill="#f6f8f9" stroke="#6e6e6e" stroke-width="0.7" stroke-linejoin="round" />
<polygon points="1625,314 1660,312 1700,315 1700,322 1625,324" fill="#f6f8f9" stroke="#6e6e6e" stroke-width="0.7" stroke-linejoin="round" />
<polygon points="1248,327 1287,327 1539,321 1580,323 1916,312 1916,372 1629,403 1540,420 1440,427 1297,438 1253,435" fill="#f6f8f9" stroke="#6e6e6e" stroke-width="0.7" stroke-linejoin="round" />
<polygon points="1248,328 1287,328 1290,341 1297,341 1297,438 1253,435" fill="#ebedee" stroke="#6e6e6e" stroke-width="0.7" stroke-linejoin="round" />
<polygon points="1287,327 1539,321 1539,330 1297,341.5 1290,341" fill="#f2f4f5" stroke="#6e6e6e" stroke-width="0.7" stroke-linejoin="round" />
<polyline points="1539,330 1916,318" fill="none" stroke="#6e6e6e" stroke-width="0.8" />
<line x1="1580.0" y1="324.0" x2="1577.0" y2="402.0" stroke="#777" stroke-width="0.8"/>
<line x1="1590.3" y1="323.7" x2="1587.3" y2="399.9" stroke="#777" stroke-width="0.8"/>
<line x1="1600.6" y1="323.4" x2="1597.6" y2="397.8" stroke="#777" stroke-width="0.8"/>
<line x1="1610.9" y1="323.1" x2="1607.9" y2="395.7" stroke="#777" stroke-width="0.8"/>
<line x1="1621.2" y1="322.8" x2="1618.2" y2="393.6" stroke="#777" stroke-width="0.8"/>
<line x1="1631.5" y1="322.5" x2="1628.5" y2="391.5" stroke="#777" stroke-width="0.8"/>
<line x1="1641.8" y1="322.2" x2="1638.8" y2="389.4" stroke="#777" stroke-width="0.8"/>
<line x1="1652.1" y1="321.9" x2="1649.1" y2="387.3" stroke="#777" stroke-width="0.8"/>
<line x1="1662.4" y1="321.6" x2="1659.4" y2="385.2" stroke="#777" stroke-width="0.8"/>
<line x1="1672.7" y1="321.3" x2="1669.7" y2="383.1" stroke="#777" stroke-width="0.8"/>
<line x1="1683.0" y1="321.0" x2="1680.0" y2="381.0" stroke="#777" stroke-width="0.8"/>
<line x1="1693.3" y1="320.7" x2="1690.3" y2="378.9" stroke="#777" stroke-width="0.8"/>
<line x1="1703.6" y1="320.4" x2="1700.6" y2="376.8" stroke="#777" stroke-width="0.8"/>
<line x1="1713.9" y1="320.1" x2="1710.9" y2="374.7" stroke="#777" stroke-width="0.8"/>
<line x1="1724.2" y1="319.8" x2="1721.2" y2="372.6" stroke="#777" stroke-width="0.8"/>
<line x1="1539" y1="320" x2="1535" y2="420.0" stroke="#888" stroke-width="0.8"/>
<line x1="1728" y1="320" x2="1724" y2="395.43" stroke="#888" stroke-width="0.8"/>
<line x1="1825" y1="320" x2="1821" y2="382.82" stroke="#888" stroke-width="0.8"/>
<line x1="1836" y1="320" x2="1832" y2="381.39" stroke="#888" stroke-width="0.8"/>
<line x1="1870" y1="320" x2="1866" y2="376.97" stroke="#888" stroke-width="0.8"/>
<line x1="1884" y1="320" x2="1880" y2="375.15" stroke="#888" stroke-width="0.8"/>
<polygon points="1728,330 1745,322 1740,392 1722,395" fill="#ebedee" stroke="#6e6e6e" stroke-width="0.5" stroke-linejoin="round" />
<polygon points="1860,312 1876,312 1866,375 1850,377" fill="#ebedee" stroke="#6e6e6e" stroke-width="0.5" stroke-linejoin="round" />
<polygon points="1905,322 1916,320 1916,440 1897,440" fill="#b4b4b4" stroke="#6e6e6e" stroke-width="0.7" stroke-linejoin="round" />
<polygon points="986,254 993,256 1022,447 1005,447" fill="#707070" />
<polygon points="986,258 1005,447 986,447" fill="#f0f2f3" />
<polygon points="1001,307 1033,307 1035,321 1062,324 1066,353 1007,358" fill="#f6f8f9" stroke="#6e6e6e" stroke-width="0.7" stroke-linejoin="round" />
<polygon points="1007,358 1070,353 1093,351 1097,447 1022,447" fill="#f6f8f9" stroke="#6e6e6e" stroke-width="0.7" stroke-linejoin="round" />
<polygon points="1074,318 1091,318 1093,351 1077,351" fill="#f6f8f9" stroke="#6e6e6e" stroke-width="0.7" stroke-linejoin="round" />
<polygon points="1076,311 1092,311 1092,318 1076,318" fill="#f6f8f9" stroke="#6e6e6e" stroke-width="0.7" stroke-linejoin="round" />
<polyline points="1004,330 1007,358" fill="none" stroke="#6e6e6e" stroke-width="0.8" />
<polygon points="1094.4,331 1100,322.5 1152,326 1152,320.5 1161.7,320.5 1161.7,320 1178,320 1179,326.7 1189,327 1195,432 1106,434" fill="#f6f8f9" stroke="#6e6e6e" stroke-width="0.7" stroke-linejoin="round" />
<polygon points="1101,323 1152,327 1152,335.5 1097,332" fill="#eceeef" stroke="#6e6e6e" stroke-width="0.6" stroke-linejoin="round" />
<polygon points="1151.7,320.5 1161.7,320.5 1162,335.5 1152,335.5" fill="#e8eaeb" stroke="#6e6e6e" stroke-width="0.6" stroke-linejoin="round" />
<line x1="1096.0" y1="332.0" x2="1103.0" y2="434" stroke="#8c8c8c" stroke-width="0.7"/>
<line x1="1100.0" y1="332.2" x2="1107.5" y2="434" stroke="#8c8c8c" stroke-width="0.7"/>
<line x1="1104.0" y1="332.5" x2="1112.1" y2="434" stroke="#8c8c8c" stroke-width="0.7"/>
<line x1="1108.0" y1="332.8" x2="1116.7" y2="434" stroke="#8c8c8c" stroke-width="0.7"/>
<line x1="1112.0" y1="333.0" x2="1121.2" y2="434" stroke="#8c8c8c" stroke-width="0.7"/>
<line x1="1116.0" y1="333.2" x2="1125.8" y2="434" stroke="#8c8c8c" stroke-width="0.7"/>
<line x1="1120.0" y1="333.5" x2="1130.3" y2="434" stroke="#8c8c8c" stroke-width="0.7"/>
<line x1="1124.0" y1="333.8" x2="1134.8" y2="434" stroke="#8c8c8c" stroke-width="0.7"/>
<line x1="1128.0" y1="334.0" x2="1139.4" y2="434" stroke="#8c8c8c" stroke-width="0.7"/>
<line x1="1132.0" y1="334.2" x2="1144.0" y2="434" stroke="#8c8c8c" stroke-width="0.7"/>
<line x1="1136.0" y1="334.5" x2="1148.5" y2="434" stroke="#8c8c8c" stroke-width="0.7"/>
<line x1="1140.0" y1="334.8" x2="1153.0" y2="434" stroke="#8c8c8c" stroke-width="0.7"/>
<line x1="1144.0" y1="335.0" x2="1157.6" y2="434" stroke="#8c8c8c" stroke-width="0.7"/>
<line x1="1148.0" y1="335.2" x2="1162.2" y2="434" stroke="#8c8c8c" stroke-width="0.7"/>
<line x1="1155.5" y1="336" x2="1164.5" y2="433" stroke="#8c8c8c" stroke-width="0.7"/>
<line x1="1161" y1="336" x2="1170" y2="433" stroke="#8c8c8c" stroke-width="0.7"/>
<polygon points="1189,327 1249,326 1252,402 1194,404" fill="#e6e6e6" />
<polygon points="1190,341 1203,339 1211,332 1224,328 1249,326 1250,372 1193,375" fill="#f8f8f8" stroke="#777" stroke-width="0.6" stroke-linejoin="round" />
<polygon points="1190,339 1206,339 1203,346 1190,347" fill="#a8a8a8" />
<polyline points="1201,352 1212,332 1228,356" fill="none" stroke="#888" stroke-width="2.2" />
<polyline points="1218,330 1234,356" fill="none" stroke="#888" stroke-width="1.6" />
<polyline points="1225,356 1236,346 1243,356" fill="none" stroke="#888" stroke-width="1.2" />
<polyline points="1191,356 1249,354" fill="none" stroke="#999" stroke-width="0.6" />
<polyline points="1195,366 1249,364" fill="none" stroke="#aaa" stroke-width="0.6" />
<polygon points="1230,338 1250,338 1250,352 1232,352" fill="#58b04a" />
<polygon points="1192,375 1250,367 1252,402 1194,404" fill="#5d7f8a" />
<polyline points="1193,378 1251,371.0" fill="none" stroke="#d9c9cc" stroke-width="1.0" />
<polyline points="1193,383 1251,376.5" fill="none" stroke="#7ea05a" stroke-width="1.0" />
<polyline points="1193,388 1251,382.0" fill="none" stroke="#c7c7c7" stroke-width="1.0" />
<polyline points="1193,393 1251,387.5" fill="none" stroke="#e8d0d4" stroke-width="1.0" />
<polyline points="1193,398 1251,393.0" fill="none" stroke="#8a9a9a" stroke-width="1.0" />
<polygon points="1201,375 1222,375 1222,383 1201,383" fill="#ececec" stroke="#888" stroke-width="0.5" stroke-linejoin="round" />
<polygon points="1194,403 1252,400 1253,423 1197,424" fill="#58b04a" />
<polygon points="1097,447 1106,434 1195,431 1253,420 1283,433 1283,470 986,470 986,449 1022,447" fill="#e1e1e1" />
<polygon points="1103,422 1143.6,432.5 1104,433.6" fill="#58b04a" />
<polygon points="1112,443.5 1204,432.5 1281.5,451 1276,455.5 1223.5,456.6 1211.5,439" fill="#58b04a" stroke="#8a8a8a" stroke-width="0.5" stroke-linejoin="round" />
<polygon points="1000,449 1204,429 1206,432 1000,452" fill="#285a6a" />
<polygon points="1230,429 1253,431 1287,442 1287,447 1257,438" fill="#fde0e4" />
<polygon points="1192,424 1253,422 1253,427 1200,429" fill="#fde0e4" />
<polyline points="1224,461.0 1287,459.0" fill="none" stroke="#bdbdbd" stroke-width="1.6" />
<polyline points="1224,464.5 1287,462.5" fill="none" stroke="#80cf78" stroke-width="1.6" />
<polyline points="1224,468.0 1287,466.0" fill="none" stroke="#bdbdbd" stroke-width="1.6" />
<polyline points="1224,471.5 1287,469.5" fill="none" stroke="#fde0e4" stroke-width="1.6" />
<polygon points="1283,437 1629,404 1903,372 1916,372 1916,500 1283,500" fill="#dcdcdc" />
<polyline points="1629,404 1903,372" fill="none" stroke="#fde0e4" stroke-width="2.2" />
<polygon points="1802,402 1870,395 1872,417 1810,418" fill="#fde0e4" />
<polyline points="1722,391 1872,405" fill="none" stroke="#285a6a" stroke-width="1.8" />
<polygon points="1680,395 1722,391 1860,404 1700,410" fill="#d6d6d6" stroke="#6e6e6e" stroke-width="0.5" stroke-linejoin="round" />
<polygon points="1633,410 1680,405 1830,422.5 1762.5,427.5" fill="#58b04a" stroke="#8a8a8a" stroke-width="0.5" stroke-linejoin="round" />
<polyline points="1630,420 1700,426 1770,432" fill="none" stroke="#9a9a9a" stroke-width="0.7" />
<ellipse cx="1818" cy="432" rx="12" ry="3" fill="#58b04a"/>
<ellipse cx="1865" cy="429" rx="13" ry="3" fill="#58b04a"/>
<ellipse cx="1637" cy="431" rx="8" ry="4" fill="#58b04a"/>
<polygon points="1461,378 1494,376 1560,394 1522,394" fill="#dcdcdc" stroke="#6e6e6e" stroke-width="0.7" stroke-linejoin="round" />
<polygon points="1461,378 1522,394 1522,450 1461,449" fill="#bfbfbf" stroke="#6e6e6e" stroke-width="0.7" stroke-linejoin="round" />
<polygon points="1522,394 1560,394 1560,445 1522,448" fill="#fafafa" stroke="#6e6e6e" stroke-width="0.7" stroke-linejoin="round" />
<polygon points="1523,376 1600,386 1630,391 1630,442 1560,445 1560,394" fill="#e8e8e8" stroke="#6e6e6e" stroke-width="0.7" stroke-linejoin="round" />
<polygon points="1590,391 1630,391 1630,442 1590,443" fill="#fafafa" stroke="#6e6e6e" stroke-width="0.7" stroke-linejoin="round" />
<polygon points="1560,405 1590,404 1590,443 1560,445" fill="#f4f4f4" stroke="#6e6e6e" stroke-width="0.5" stroke-linejoin="round" />
<polygon points="1825,382 1880,380 1880,405 1825,407" fill="#eeeeee" stroke="#6e6e6e" stroke-width="0.5" stroke-linejoin="round" />
<polygon points="1870,385 1895,382 1895,440 1868,438" fill="#f4f4f4" stroke="#6e6e6e" stroke-width="0.5" stroke-linejoin="round" />
<polygon points="1898,380 1916,378 1916,442 1897,441" fill="#b8b8b8" stroke="#6e6e6e" stroke-width="0.5" stroke-linejoin="round" />
<polygon points="1330,454 1336,454 1336,465 1330,465" fill="#f4f4f4" stroke="#6e6e6e" stroke-width="0.5" stroke-linejoin="round" />
<polygon points="1369,457 1375,457 1375,468 1369,468" fill="#f4f4f4" stroke="#6e6e6e" stroke-width="0.5" stroke-linejoin="round" />
<polygon points="1400,452 1406,452 1406,463 1400,463" fill="#f4f4f4" stroke="#6e6e6e" stroke-width="0.5" stroke-linejoin="round" />
<polygon points="1490,450 1496,450 1496,461 1490,461" fill="#f4f4f4" stroke="#6e6e6e" stroke-width="0.5" stroke-linejoin="round" />
<polygon points="1500,455 1506,455 1506,466 1500,466" fill="#f4f4f4" stroke="#6e6e6e" stroke-width="0.5" stroke-linejoin="round" />
<polygon points="1525,452 1531,452 1531,463 1525,463" fill="#f4f4f4" stroke="#6e6e6e" stroke-width="0.5" stroke-linejoin="round" />
<polygon points="1590,444 1596,444 1596,455 1590,455" fill="#f4f4f4" stroke="#6e6e6e" stroke-width="0.5" stroke-linejoin="round" />
<polygon points="1612,444 1618,444 1618,455 1612,455" fill="#f4f4f4" stroke="#6e6e6e" stroke-width="0.5" stroke-linejoin="round" />
<polygon points="1715,440 1721,440 1721,451 1715,451" fill="#f4f4f4" stroke="#6e6e6e" stroke-width="0.5" stroke-linejoin="round" />
<polygon points="1740,436 1746,436 1746,447 1740,447" fill="#f4f4f4" stroke="#6e6e6e" stroke-width="0.5" stroke-linejoin="round" />
<polygon points="1760,440 1766,440 1766,451 1760,451" fill="#f4f4f4" stroke="#6e6e6e" stroke-width="0.5" stroke-linejoin="round" />
<polygon points="1770,436 1776,436 1776,447 1770,447" fill="#f4f4f4" stroke="#6e6e6e" stroke-width="0.5" stroke-linejoin="round" />
<polygon points="1790,438 1796,438 1796,449 1790,449" fill="#f4f4f4" stroke="#6e6e6e" stroke-width="0.5" stroke-linejoin="round" />
<polygon points="1283,383 1389.7,379.4 1439,398.3 1316.5,403" fill="#dedede" stroke="#6e6e6e" stroke-width="0.7" stroke-linejoin="round" />
<polygon points="1331,385 1385,383 1397,394 1357,398" fill="#fafafa" stroke="#6e6e6e" stroke-width="0.5" stroke-linejoin="round" />
<polygon points="1283,383 1316.5,403 1320,505 1289,485" fill="#c9c9c9" stroke="#6e6e6e" stroke-width="0.7" stroke-linejoin="round" />
<polygon points="1316.5,403 1439,398.3 1440,470 1320,470" fill="#fcfcfc" stroke="#6e6e6e" stroke-width="0.7" stroke-linejoin="round" />
<polyline points="1360.5,399 1362,468" fill="none" stroke="#6e6e6e" stroke-width="0.8" />
<polyline points="1369,399 1371,468" fill="none" stroke="#6e6e6e" stroke-width="0.8" />
<polyline points="1388,398 1389,468" fill="none" stroke="#6e6e6e" stroke-width="0.8" />
<polyline points="1397.6,398 1398,468" fill="none" stroke="#6e6e6e" stroke-width="0.8" />
<polygon points="1336,468.4 1389.7,466 1391,453.5 1440,450 1632,441 1822,436 1865,446 1447,471 1424,486.5 1346,491" fill="#dfdfdf" stroke="#6e6e6e" stroke-width="0.7" stroke-linejoin="round" />
<polygon points="1637,447 1822,440 1822,457 1645,460" fill="#e4e4e4" stroke="#6e6e6e" stroke-width="0.5" stroke-linejoin="round" />
<polygon points="1865,446 1916,440 1916,500 1865,500" fill="#b0b0b0" />
<polygon points="1850,474 1916,470 1916,480 1858,482" fill="#fde0e4" />
<polygon points="1862,482 1916,478 1916,486 1862,490" fill="#285a6a" />
<polygon points="1346,491 1424,486.5 1424,472 1447,471 1645,460 1865,446 1862,498 1346,532" fill="#ffffff" stroke="#6e6e6e" stroke-width="0.7" stroke-linejoin="round" />
<polyline points="1645,460 1640,525" fill="none" stroke="#6e6e6e" stroke-width="0.8" />
<polyline points="1424,486.5 1424,512 1447,510 1447,471" fill="none" stroke="#6e6e6e" stroke-width="0.8" />
<polygon points="1324,460 1346,468 1346,532 1323,516" fill="#d2d2d2" stroke="#6e6e6e" stroke-width="0.7" stroke-linejoin="round" />
<polygon points="1227,472 1287,470 1346,532 1231,546" fill="#b2b2b2" />
<polygon points="1257,481 1287,479 1308,506 1278,508" fill="#58b04a" />
<polygon points="1229,512 1262,510 1270,530 1300,540 1231,546" fill="#58b04a" />
<polygon points="1279,510 1313,508 1325,520 1290,524" fill="#58b04a" />
<polygon points="1230,506 1256,505 1257,511 1230,512" fill="#80cf78" />
<polygon points="1291,520 1337,516 1340,524 1295,528" fill="#80cf78" />
<polygon points="1297,530 1330,527 1336,537 1302,540" fill="#d8d8d8" />
<polygon points="1259,472 1289,471 1294,479 1264,480" fill="#fde0e4" />
<polygon points="986,447 1212,439 1225,459 1229,545 986,561" fill="#ffffff" stroke="#6e6e6e" stroke-width="0.7" stroke-linejoin="round" />
<polygon points="986,447 1212,439 1225,459 986,471" fill="#dedede" stroke="#6e6e6e" stroke-width="0.7" stroke-linejoin="round" />
<polyline points="986,486 1228,477" fill="none" stroke="#999" stroke-width="0.8" />
<polyline points="986,501 1228,492" fill="none" stroke="#999" stroke-width="0.8" />
<polyline points="986,516 1228,507" fill="none" stroke="#999" stroke-width="0.8" />
<polyline points="986,531 1228,522" fill="none" stroke="#999" stroke-width="0.8" />
<polyline points="986,546 1228,537" fill="none" stroke="#999" stroke-width="0.8" />
<polygon points="986,560 1916,493 1916,510 986,582" fill="#c4c4c4" />
<polygon points="986,559 1916,492 1916,495 986,563" fill="#58b04a" />
<polyline points="986,564 1916,496.5" fill="none" stroke="#fde0e4" stroke-width="1.6" />
<polygon points="986,566 1916,498 1916,502 986,570" fill="#dadada" />
<polyline points="986,573 1916,501" fill="none" stroke="#a0a0a0" stroke-width="1" />
<polygon points="986,573.5 1916,501.5 1916,503 986,580" fill="#80cf78" />
<polygon points="986,580 1916,502.8 1916,531 1797,541 1425,576 986,615" fill="#9fdff2" />
<polyline points="986,580 1916,502.8" fill="none" stroke="#7a9aa0" stroke-width="0.6" />
<polygon points="1101,554 1134,551.5 1134,556 1101,558.5" fill="#2a5a6a" />
<polygon points="986,615 1425,576 1797,541 1916,531 1916,572 1820,581 1450,640 1200,760 986,760" fill="#80cf78" />
<polyline points="986,628 1440,585" fill="none" stroke="#6aa866" stroke-width="0.7" />
<polyline points="986,635 1440,592" fill="none" stroke="#6aa866" stroke-width="0.7" />
<polyline points="986,642 1440,599" fill="none" stroke="#6aa866" stroke-width="0.7" />
<polyline points="986,649 1440,606" fill="none" stroke="#6aa866" stroke-width="0.7" />
<polygon points="1120,608 1126,607 1126,614 1120,615" fill="#e6eab8" stroke="#999" stroke-width="0.5" stroke-linejoin="round" />
<polygon points="1120,616 1126,615 1126,619 1120,620" fill="#e6eab8" stroke="#999" stroke-width="0.5" stroke-linejoin="round" />
<polygon points="986,646 1081,637 1148,643 1187,642 1300,620 1300,650 1168,650 986,712" fill="#e1e1e1" stroke="#9a9a9a" stroke-width="0.6" stroke-linejoin="round" />
<polygon points="986,651 1071,644 1132,651 986,702" fill="#58b04a" stroke="#8a8a8a" stroke-width="0.5" stroke-linejoin="round" />
<polygon points="1041,658 1053,652 1078,652 1092,657 1083,664 1055,666" fill="#80cf78" />
<polygon points="986,684 996,686 998,694 986,700" fill="#80cf78" />
<polygon points="1820,581 1916,572 1916,627 1816,610" fill="#58b04a" />
<polygon points="1816,610 1916,627 1916,708 1839,674" fill="#1d5015" />
<polygon points="986,712 1168,650 1300,600 1449,613 1816,610 1916,627 1916,1045 986,1045" fill="#1d5015" />
<polygon points="1058,858 1240,760 1449,613 1475,690 1839,674 1916,706 1916,733 1840,750 1577,790 1449,987" fill="#d9d9d9" />
<polygon points="1058,857 1180,888 1305,927 1436,969 1449,987 1296,937 1180,899 1062,866" fill="#aaaaaa" />
<polygon points="1577,790 1592,798 1449,987 1436,969" fill="#b2b2b2" />
<polyline points="1058,857 1180,888 1305,927 1436,969 1577,790" fill="none" stroke="#f4f4f4" stroke-width="1.2" />
<polyline points="1577,790 1840,750 1916,733" fill="none" stroke="#999" stroke-width="1" />
<polyline points="1400,767 1442,736 1475,722" fill="none" stroke="#aaa" stroke-width="1" />
<polygon points="1425,562 1478,606 1858,566 1847,644 1839,674 1475,722 1442,690" fill="#d9d9d9" />
<polygon points="1555,682 1563,681 1563,704 1555,705" fill="#c8c8c8" />
<polygon points="1585,678 1593,677 1593,700 1585,701" fill="#c8c8c8" />
<polygon points="1650,670 1658,669 1658,692 1650,693" fill="#c8c8c8" />
<polygon points="1690,664 1698,663 1698,686 1690,687" fill="#c8c8c8" />
<polygon points="1730,659 1738,658 1738,681 1730,682" fill="#c8c8c8" />
<polygon points="1600,676 1640,671 1640,680 1600,685" fill="#f4f4f4" />
<polyline points="1478,630.5 1851,589" fill="none" stroke="#ffffff" stroke-width="3.2" />
<polyline points="1478,632.7 1851,591.2" fill="none" stroke="#9a9a9a" stroke-width="0.7" />
<polyline points="1478,657 1851,614" fill="none" stroke="#ffffff" stroke-width="3.2" />
<polyline points="1478,659.2 1851,616.2" fill="none" stroke="#9a9a9a" stroke-width="0.7" />
<polyline points="1478,683 1851,640" fill="none" stroke="#ffffff" stroke-width="3.2" />
<polyline points="1478,685.2 1851,642.2" fill="none" stroke="#9a9a9a" stroke-width="0.7" />
<polyline points="1475,721 1839,673" fill="none" stroke="#ffffff" stroke-width="2.6" />
<polyline points="1475,723.5 1839,675.5" fill="none" stroke="#9a9a9a" stroke-width="0.7" />
<polyline points="1428,583 1478,632" fill="none" stroke="#ffffff" stroke-width="3" />
<polyline points="1428,585 1478,634" fill="none" stroke="#9a9a9a" stroke-width="0.7" />
<polyline points="1430.5,608 1478,658" fill="none" stroke="#ffffff" stroke-width="3" />
<polyline points="1430.5,610 1478,660" fill="none" stroke="#9a9a9a" stroke-width="0.7" />
<polyline points="1434,630 1478,685" fill="none" stroke="#ffffff" stroke-width="3" />
<polyline points="1434,632 1478,687" fill="none" stroke="#9a9a9a" stroke-width="0.7" />
<polyline points="1478,606 1477,689" fill="none" stroke="#9c9c9c" stroke-width="3.6" />
<polyline points="1478.3,606 1477.3,689" fill="none" stroke="#e6e6e6" stroke-width="1.2" />
<polyline points="1537.5,600 1536.5,681" fill="none" stroke="#9c9c9c" stroke-width="3.6" />
<polyline points="1537.8,600 1536.8,681" fill="none" stroke="#e6e6e6" stroke-width="1.2" />
<polyline points="1594,594 1593,674" fill="none" stroke="#9c9c9c" stroke-width="3.6" />
<polyline points="1594.3,594 1593.3,674" fill="none" stroke="#e6e6e6" stroke-width="1.2" />
<polyline points="1651,588 1650,666" fill="none" stroke="#9c9c9c" stroke-width="3.6" />
<polyline points="1651.3,588 1650.3,666" fill="none" stroke="#e6e6e6" stroke-width="1.2" />
<polyline points="1704,583 1703,659" fill="none" stroke="#9c9c9c" stroke-width="3.6" />
<polyline points="1704.3,583 1703.3,659" fill="none" stroke="#e6e6e6" stroke-width="1.2" />
<polyline points="1755.5,577 1754.5,652" fill="none" stroke="#9c9c9c" stroke-width="3.6" />
<polyline points="1755.8,577 1754.8,652" fill="none" stroke="#e6e6e6" stroke-width="1.2" />
<polyline points="1805.5,572 1804.5,646" fill="none" stroke="#9c9c9c" stroke-width="3.6" />
<polyline points="1805.8,572 1804.8,646" fill="none" stroke="#e6e6e6" stroke-width="1.2" />
<polyline points="1855.5,567 1854.5,641" fill="none" stroke="#9c9c9c" stroke-width="3.6" />
<polyline points="1855.8,567 1854.8,641" fill="none" stroke="#e6e6e6" stroke-width="1.2" />
<polyline points="1426,563 1428,668" fill="none" stroke="#9c9c9c" stroke-width="3.4" />
<polyline points="1426.3,563 1428.3,668" fill="none" stroke="#e6e6e6" stroke-width="1.1" />
<polyline points="1444,577 1446,682" fill="none" stroke="#9c9c9c" stroke-width="3.4" />
<polyline points="1444.3,577 1446.3,682" fill="none" stroke="#e6e6e6" stroke-width="1.1" />
<polyline points="1457,588 1459,693" fill="none" stroke="#9c9c9c" stroke-width="3.4" />
<polyline points="1457.3,588 1459.3,693" fill="none" stroke="#e6e6e6" stroke-width="1.1" />
<polygon points="1474.5,689 1478,689 1474.8,722 1473.2,722" fill="#f8f8f8" stroke="#999" stroke-width="0.4" stroke-linejoin="round" />
<polygon points="1533.5,681 1537,681 1531.8,715 1530.2,715" fill="#f8f8f8" stroke="#999" stroke-width="0.4" stroke-linejoin="round" />
<polygon points="1589.5,674 1593,674 1587.8,707 1586.2,707" fill="#f8f8f8" stroke="#999" stroke-width="0.4" stroke-linejoin="round" />
<polygon points="1641.5,667 1645,667 1640.8,700 1639.2,700" fill="#f8f8f8" stroke="#999" stroke-width="0.4" stroke-linejoin="round" />
<polygon points="1693.5,660 1697,660 1692.8,693 1691.2,693" fill="#f8f8f8" stroke="#999" stroke-width="0.4" stroke-linejoin="round" />
<polygon points="1744.5,653 1748,653 1743.8,686 1742.2,686" fill="#f8f8f8" stroke="#999" stroke-width="0.4" stroke-linejoin="round" />
<polygon points="1794.5,647 1798,647 1794.8,679 1793.2,679" fill="#f8f8f8" stroke="#999" stroke-width="0.4" stroke-linejoin="round" />
<polygon points="1839.5,643 1843,643 1839.8,673 1838.2,673" fill="#f8f8f8" stroke="#999" stroke-width="0.4" stroke-linejoin="round" />
<polygon points="1425,562 1766,530 1858,566 1478,606" fill="#004cff" />
<polyline points="1425,563 1478,607 1858,567" fill="none" stroke="#ffffff" stroke-width="1.6" />
<polyline points="1425,564.5 1478,608.5 1858,568.5" fill="none" stroke="#8899aa" stroke-width="0.5" />
<polygon points="1555,566 1614,560 1630,569 1569,575" fill="#f6f6f6" stroke="#888" stroke-width="0.7" stroke-linejoin="round" />
<polyline points="1575,565 1590,573" fill="none" stroke="#999" stroke-width="1" />
<polyline points="1600,561 1612,571" fill="none" stroke="#999" stroke-width="1" />
<polygon points="1058,702 1245,747 1449,613 1449,640 1440,740 1245.6,905 1086.7,853 1074,806" fill="#d9d9d9" />
<polygon points="1063,705 1120,718 1105,716 1065,734" fill="#1d5015" />
<polygon points="1063,705 1099,714 1065,734" fill="#1d5015" />
<polygon points="1068,741 1109,751 1070,767" fill="#1d5015" />
<polygon points="1072,774.5 1105,782.7 1074,800" fill="#1d5015" />
<polygon points="1076.5,810 1119,820 1085.6,849" fill="#1d5015" />
<polyline points="1087,850 1127,822" fill="none" stroke="#9a9a9a" stroke-width="0.5" />
<polygon points="1058,857 1086.7,853 1140,818 1245,850 1245.6,905 1180,888" fill="#d9d9d9" />
<polyline points="1058,859 1086.7,853" fill="none" stroke="#999" stroke-width="0.6" />
<polyline points="1063.0,738 1245.5,782.7" fill="none" stroke="#ffffff" stroke-width="3.4" />
<polyline points="1063.0,740.4 1245.5,785.1" fill="none" stroke="#9a9a9a" stroke-width="0.7" />
<polyline points="1067.212,770.4 1245.5,817" fill="none" stroke="#ffffff" stroke-width="3.4" />
<polyline points="1067.212,772.8 1245.5,819.4" fill="none" stroke="#9a9a9a" stroke-width="0.7" />
<polyline points="1071.58,804 1245.5,853" fill="none" stroke="#ffffff" stroke-width="3.4" />
<polyline points="1071.58,806.4 1245.5,855.4" fill="none" stroke="#9a9a9a" stroke-width="0.7" />
<polyline points="1086.7,853 1245.5,902" fill="none" stroke="#ffffff" stroke-width="2.6" />
<polyline points="1086.7,855.5 1245.5,904.5" fill="none" stroke="#9a9a9a" stroke-width="0.7" />
<polyline points="1245.5,782.7 1447,652" fill="none" stroke="#ffffff" stroke-width="3.4" />
<polyline points="1245.5,785.1 1447,654.4" fill="none" stroke="#9a9a9a" stroke-width="0.7" />
<polyline points="1245.5,817 1447,687" fill="none" stroke="#ffffff" stroke-width="3.4" />
<polyline points="1245.5,819.4 1447,689.4" fill="none" stroke="#9a9a9a" stroke-width="0.7" />
<polyline points="1245.5,853 1447,722" fill="none" stroke="#ffffff" stroke-width="3.4" />
<polyline points="1245.5,855.4 1447,724.4" fill="none" stroke="#9a9a9a" stroke-width="0.7" />
<polyline points="1245.5,902 1440,745" fill="none" stroke="#ffffff" stroke-width="2.6" />
<polyline points="1245.5,904.5 1440,747.5" fill="none" stroke="#9a9a9a" stroke-width="0.7" />
<polyline points="1060,704 1073,805" fill="none" stroke="#9c9c9c" stroke-width="4.2" />
<polyline points="1060.3,704 1073.3,805" fill="none" stroke="#e6e6e6" stroke-width="1.4" />
<polyline points="1123,719 1136,821" fill="none" stroke="#9c9c9c" stroke-width="4.2" />
<polyline points="1123.3,719 1136.3,821" fill="none" stroke="#e6e6e6" stroke-width="1.4" />
<polyline points="1169,730 1183,834" fill="none" stroke="#9c9c9c" stroke-width="4.2" />
<polyline points="1169.3,730 1183.3,834" fill="none" stroke="#e6e6e6" stroke-width="1.4" />
<polyline points="1244,747 1246,853" fill="none" stroke="#9c9c9c" stroke-width="4.2" />
<polyline points="1244.3,747 1246.3,853" fill="none" stroke="#e6e6e6" stroke-width="1.4" />
<polyline points="1296,715 1297,820" fill="none" stroke="#9c9c9c" stroke-width="4.2" />
<polyline points="1296.3,715 1297.3,820" fill="none" stroke="#e6e6e6" stroke-width="1.4" />
<polyline points="1341,686 1342,790" fill="none" stroke="#9c9c9c" stroke-width="4.2" />
<polyline points="1341.3,686 1342.3,790" fill="none" stroke="#e6e6e6" stroke-width="1.4" />
<polyline points="1381,660 1382,764" fill="none" stroke="#9c9c9c" stroke-width="4.2" />
<polyline points="1381.3,660 1382.3,764" fill="none" stroke="#e6e6e6" stroke-width="1.4" />
<polyline points="1416,637 1416,740" fill="none" stroke="#9c9c9c" stroke-width="4.2" />
<polyline points="1416.3,637 1416.3,740" fill="none" stroke="#e6e6e6" stroke-width="1.4" />
<polyline points="1447,616 1446,722" fill="none" stroke="#9c9c9c" stroke-width="4.2" />
<polyline points="1447.3,616 1446.3,722" fill="none" stroke="#e6e6e6" stroke-width="1.4" />
<polygon points="1072,806 1076,806 1088,851 1086,851" fill="#f8f8f8" stroke="#999" stroke-width="0.4" stroke-linejoin="round" />
<polygon points="1135,822 1139,822 1144,869 1142,869" fill="#f8f8f8" stroke="#999" stroke-width="0.4" stroke-linejoin="round" />
<polygon points="1182,835 1186,835 1187,882 1185,882" fill="#f8f8f8" stroke="#999" stroke-width="0.4" stroke-linejoin="round" />
<polygon points="1244,853 1248,853 1247,902 1245,902" fill="#f8f8f8" stroke="#999" stroke-width="0.4" stroke-linejoin="round" />
<polygon points="1295,820 1299,820 1295,868 1293,868" fill="#f8f8f8" stroke="#999" stroke-width="0.4" stroke-linejoin="round" />
<polygon points="1340,790 1344,790 1340,835 1338,835" fill="#f8f8f8" stroke="#999" stroke-width="0.4" stroke-linejoin="round" />
<polygon points="1380,764 1384,764 1379,805 1377,805" fill="#f8f8f8" stroke="#999" stroke-width="0.4" stroke-linejoin="round" />
<polygon points="1414,740 1418,740 1413,778 1411,778" fill="#f8f8f8" stroke="#999" stroke-width="0.4" stroke-linejoin="round" />
<polygon points="1058,702 1299,590 1449,613 1245,747" fill="#004cff" />
<polyline points="1058,703.5 1245,748.5 1449,614.5" fill="none" stroke="#ffffff" stroke-width="1.8" />
<polyline points="1058,705.5 1245,750.5 1449,616.5" fill="none" stroke="#8a8a8a" stroke-width="0.6" />
<polygon points="1273,640 1318,617 1354,624 1311,647" fill="#f4f4f4" stroke="#888" stroke-width="0.7" stroke-linejoin="round" />
<polygon points="1293,631 1318,619 1332,622 1308,634" fill="#dcdcdc" stroke="#999" stroke-width="0.5" stroke-linejoin="round" />
<polyline points="1296,632 1300,642" fill="none" stroke="#999" stroke-width="0.8" />
<polyline points="1306,634 1318,641" fill="none" stroke="#999" stroke-width="0.8" />
<polygon points="1888,716 1916,711 1916,740 1893,744 1886,730" fill="#f4f4f4" stroke="#888" stroke-width="0.6" stroke-linejoin="round" />
<polygon points="1313,921 1402,866 1436,874 1381.5,941" fill="#565656" />
<polygon points="1400,834 1456,848 1436,874 1402,866" fill="#f0f0f0" stroke="#999" stroke-width="0.5" stroke-linejoin="round" />
<polyline points="1402,852 1446,862" fill="none" stroke="#aaa" stroke-width="0.8" />
<polygon points="1308,913 1400,829 1405,832 1313,918 1313,923 1308,921" fill="#f2f2f2" stroke="#999" stroke-width="0.5" stroke-linejoin="round" />
<polygon points="1400,829 1465,845 1463,850 1403,834" fill="#ffffff" stroke="#999" stroke-width="0.5" stroke-linejoin="round" />
<polygon points="1465,845 1467,851 1386,945 1381,941 1381,936 1461,848" fill="#f2f2f2" stroke="#999" stroke-width="0.5" stroke-linejoin="round" />
<polygon points="1296,936.5 1313,921.7 1381.5,942 1367.5,959" fill="#5e5e5e" />
<polygon points="1296.4,937 1367.5,960 1356,1019 1269,1033 1231,1010" fill="#202020" />
<polygon points="986,857 1266,1033 1166,1045 1144,996 986,893" fill="#e1e1e1" />
<polygon points="986,893 1144,996 1166,1045 986,1045" fill="#58b04a" />
<polygon points="1166,1045 1266,1033 1916,930 1916,1045" fill="#285a6a" />
<polygon points="1310,1045 1440,1024 1904,950 1916,962 1916,1045" fill="#80cf78" />
<polygon points="1579,1046 1916,989 1916,1018 1759,1046" fill="#e1e1e1" />
<polygon points="1440,1024 1479,1018 1483,1032 1444,1039" fill="#fde0e4" />
</g>
<rect x="997" y="211" width="571" height="71" rx="0" fill="#6d6d6d" stroke="#9a9a9a" stroke-width="0.8"/>
<text x="1013" y="228" font-size="12.5" fill="#f2f2f2" font-weight="bold" text-anchor="start" textLength="242" lengthAdjust="spacingAndGlyphs" >Calendar Week 4 - Wednesday, 21.01.2026</text>
<text x="1013" y="251" font-size="12.5" fill="#ececec" font-weight="normal" text-anchor="start" textLength="28" lengthAdjust="spacingAndGlyphs" >WBS</text>
<text x="1088" y="251" font-size="12.5" fill="#ececec" font-weight="normal" text-anchor="start" textLength="34" lengthAdjust="spacingAndGlyphs" >Name</text>
<text x="1266" y="251" font-size="12.5" fill="#ececec" font-weight="normal" text-anchor="start" textLength="25" lengthAdjust="spacingAndGlyphs" >Start</text>
<text x="1335" y="251" font-size="12.5" fill="#ececec" font-weight="normal" text-anchor="start" textLength="34" lengthAdjust="spacingAndGlyphs" >Finish</text>
<text x="1405" y="251" font-size="12.5" fill="#ececec" font-weight="normal" text-anchor="start" textLength="47" lengthAdjust="spacingAndGlyphs" >Duration</text>
<rect x="1001" y="258" width="8" height="22" rx="0" fill="#7397ee" />
<text x="1014" y="274" font-size="12.5" fill="#ececec" font-weight="normal" text-anchor="start" textLength="67" lengthAdjust="spacingAndGlyphs" >1.2.1.1.6.4.1</text>
<text x="1088" y="274" font-size="12.5" fill="#ececec" font-weight="normal" text-anchor="start" textLength="170" lengthAdjust="spacingAndGlyphs" >Formwork in-situ concrete slab</text>
<text x="1266" y="274" font-size="12.5" fill="#ececec" font-weight="normal" text-anchor="start" textLength="61" lengthAdjust="spacingAndGlyphs" >19.01.2026</text>
<text x="1335" y="274" font-size="12.5" fill="#ececec" font-weight="normal" text-anchor="start" textLength="61" lengthAdjust="spacingAndGlyphs" >22.01.2026</text>
<text x="1405" y="274" font-size="12.5" fill="#ececec" font-weight="normal" text-anchor="start" textLength="53" lengthAdjust="spacingAndGlyphs" >2.56 days</text>
<rect x="1467" y="263" width="50" height="12" rx="0" fill="#e8e8e8" />
<rect x="1468" y="264" width="36" height="10" rx="0" fill="#7070ee" />
<text x="1524" y="274" font-size="12.5" fill="#ececec" font-weight="normal" text-anchor="start" textLength="29" lengthAdjust="spacingAndGlyphs" >75 %</text>
<rect x="0" y="1050" width="1920" height="30" rx="0" fill="#ffffff" />
<g transform="translate(1812,1065)"><ellipse cy="-4" rx="5.5" ry="2.5" fill="none" stroke="#333" stroke-width="1.3"/><path d="M-5.5 -4 V4 A5.5 2.5 0 0 0 5.5 4 V-4" fill="none" stroke="#333" stroke-width="1.3"/><path d="M-7 -7 L7 7" stroke="#333" stroke-width="1.3"/></g><g transform="translate(1843,1065)"><path d="M-5 4 A3.5 3.5 0 0 1 -4.5 -2.5 A5 5 0 0 1 5 -2 A3.5 3.5 0 0 1 5 4 Z" fill="none" stroke="#333" stroke-width="1.3"/><path d="M0 -3 V3 M-2.5 1 L0 3.5 L2.5 1" fill="none" stroke="#333" stroke-width="1.3"/></g><g transform="translate(1874,1065)"><path d="M-5 4 V-1 A5 5 0 0 1 5 -1 V4 L6 5 H-6 Z M-1.5 6.5 H1.5" fill="none" stroke="#333" stroke-width="1.3"/><circle cx="4" cy="-5" r="2.2" fill="#f04040"/></g><g transform="translate(1905,1065)"><path d="M-7 -6 H7 V5 H-3 L-7 8 Z" fill="none" stroke="#333" stroke-width="1.3"/><path d="M-4 -3 H4 M-4 0 H4 M-4 3 H2" stroke="#333" stroke-width="1.1"/><circle cx="6" cy="-6" r="2.2" fill="#f04040"/></g>
</svg>
</body></html>
